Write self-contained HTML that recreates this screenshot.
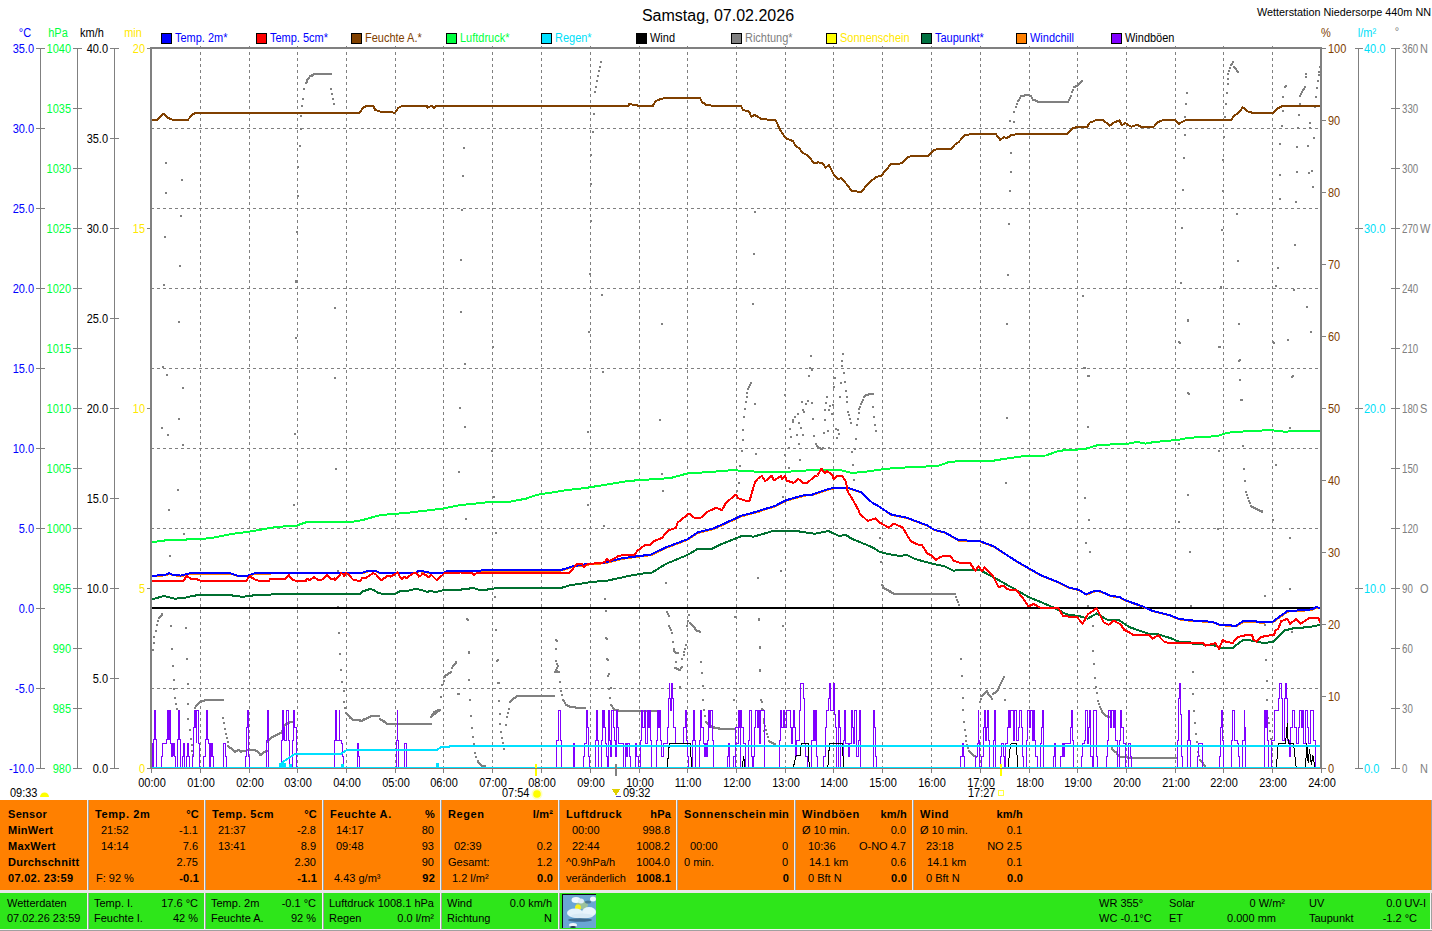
<!DOCTYPE html>
<html><head><meta charset="utf-8"><style>
html,body{margin:0;padding:0;background:#fff;width:1432px;height:931px;overflow:hidden;position:relative}
svg text{font-family:"Liberation Sans",sans-serif}
.b{position:absolute;font-family:"Liberation Sans",sans-serif;font-size:11px;white-space:pre;color:#000;line-height:16px}
</style></head><body>
<svg width="1432" height="931" viewBox="0 0 1432 931" style="position:absolute;left:0;top:0" shape-rendering="crispEdges">
<text x="718" y="21" fill="#000" text-anchor="middle" font-size="16" font-weight="normal" >Samstag, 07.02.2026</text>
<text x="1431" y="16" fill="#000" text-anchor="end" font-size="11" font-weight="normal" textLength="174" lengthAdjust="spacingAndGlyphs">Wetterstation Niedersorpe 440m NN</text>
<text transform="matrix(1 0 0 1.12 25 37)" fill="#0000ff" text-anchor="middle" font-size="11" font-weight="normal" >°C</text>
<text transform="matrix(1 0 0 1.12 58 37)" fill="#00ff40" text-anchor="middle" font-size="11" font-weight="normal" >hPa</text>
<text transform="matrix(1 0 0 1.12 92 37)" fill="#000" text-anchor="middle" font-size="11" font-weight="normal" >km/h</text>
<text transform="matrix(1 0 0 1.12 133 37)" fill="#ffe800" text-anchor="middle" font-size="11" font-weight="normal" >min</text>
<text transform="matrix(1 0 0 1.12 1326 37)" fill="#804000" text-anchor="middle" font-size="11" font-weight="normal" >%</text>
<text transform="matrix(1 0 0 1.12 1367 37)" fill="#00e0f8" text-anchor="middle" font-size="11" font-weight="normal" >l/m²</text>
<text x="1397" y="35" fill="#808080" text-anchor="middle" font-size="11" font-weight="normal" >°</text>
<rect x="161.5" y="33.5" width="10" height="10" fill="#0000ff" stroke="#000" stroke-width="1"/>
<text transform="matrix(1 0 0 1.12 175 42)" fill="#0000ff" text-anchor="start" font-size="11" font-weight="normal" >Temp. 2m*</text>
<rect x="256.5" y="33.5" width="10" height="10" fill="#ff0000" stroke="#000" stroke-width="1"/>
<text transform="matrix(1 0 0 1.12 270 42)" fill="#0000ff" text-anchor="start" font-size="11" font-weight="normal" >Temp. 5cm*</text>
<rect x="351.5" y="33.5" width="10" height="10" fill="#804000" stroke="#000" stroke-width="1"/>
<text transform="matrix(1 0 0 1.12 365 42)" fill="#804000" text-anchor="start" font-size="11" font-weight="normal" >Feuchte A.*</text>
<rect x="446.5" y="33.5" width="10" height="10" fill="#00ff40" stroke="#000" stroke-width="1"/>
<text transform="matrix(1 0 0 1.12 460 42)" fill="#00ff40" text-anchor="start" font-size="11" font-weight="normal" >Luftdruck*</text>
<rect x="541.5" y="33.5" width="10" height="10" fill="#00e0ff" stroke="#000" stroke-width="1"/>
<text transform="matrix(1 0 0 1.12 555 42)" fill="#00e0f8" text-anchor="start" font-size="11" font-weight="normal" >Regen*</text>
<rect x="636.5" y="33.5" width="10" height="10" fill="#000000" stroke="#000" stroke-width="1"/>
<text transform="matrix(1 0 0 1.12 650 42)" fill="#000" text-anchor="start" font-size="11" font-weight="normal" >Wind</text>
<rect x="731.5" y="33.5" width="10" height="10" fill="#808080" stroke="#000" stroke-width="1"/>
<text transform="matrix(1 0 0 1.12 745 42)" fill="#808080" text-anchor="start" font-size="11" font-weight="normal" >Richtung*</text>
<rect x="826.5" y="33.5" width="10" height="10" fill="#ffff00" stroke="#000" stroke-width="1"/>
<text transform="matrix(1 0 0 1.12 840 42)" fill="#ffe800" text-anchor="start" font-size="11" font-weight="normal" >Sonnenschein</text>
<rect x="921.5" y="33.5" width="10" height="10" fill="#007040" stroke="#000" stroke-width="1"/>
<text transform="matrix(1 0 0 1.12 935 42)" fill="#0000ff" text-anchor="start" font-size="11" font-weight="normal" >Taupunkt*</text>
<rect x="1016.5" y="33.5" width="10" height="10" fill="#ff8000" stroke="#000" stroke-width="1"/>
<text transform="matrix(1 0 0 1.12 1030 42)" fill="#0000ff" text-anchor="start" font-size="11" font-weight="normal" >Windchill</text>
<rect x="1111.5" y="33.5" width="10" height="10" fill="#8000ff" stroke="#000" stroke-width="1"/>
<text transform="matrix(1 0 0 1.12 1125 42)" fill="#000" text-anchor="start" font-size="11" font-weight="normal" >Windböen</text>
<line x1="40.5" y1="48" x2="40.5" y2="769" stroke="#808080" stroke-width="1" />
<line x1="36" y1="48.5" x2="45" y2="48.5" stroke="#808080" stroke-width="1" />
<text transform="matrix(1 0 0 1.12 34 53)" fill="#0000ff" text-anchor="end" font-size="11" font-weight="normal" >35.0</text>
<line x1="36" y1="128.5" x2="45" y2="128.5" stroke="#808080" stroke-width="1" />
<text transform="matrix(1 0 0 1.12 34 133)" fill="#0000ff" text-anchor="end" font-size="11" font-weight="normal" >30.0</text>
<line x1="36" y1="208.5" x2="45" y2="208.5" stroke="#808080" stroke-width="1" />
<text transform="matrix(1 0 0 1.12 34 213)" fill="#0000ff" text-anchor="end" font-size="11" font-weight="normal" >25.0</text>
<line x1="36" y1="288.5" x2="45" y2="288.5" stroke="#808080" stroke-width="1" />
<text transform="matrix(1 0 0 1.12 34 293)" fill="#0000ff" text-anchor="end" font-size="11" font-weight="normal" >20.0</text>
<line x1="36" y1="368.5" x2="45" y2="368.5" stroke="#808080" stroke-width="1" />
<text transform="matrix(1 0 0 1.12 34 373)" fill="#0000ff" text-anchor="end" font-size="11" font-weight="normal" >15.0</text>
<line x1="36" y1="448.5" x2="45" y2="448.5" stroke="#808080" stroke-width="1" />
<text transform="matrix(1 0 0 1.12 34 453)" fill="#0000ff" text-anchor="end" font-size="11" font-weight="normal" >10.0</text>
<line x1="36" y1="528.5" x2="45" y2="528.5" stroke="#808080" stroke-width="1" />
<text transform="matrix(1 0 0 1.12 34 533)" fill="#0000ff" text-anchor="end" font-size="11" font-weight="normal" >5.0</text>
<line x1="36" y1="608.5" x2="45" y2="608.5" stroke="#808080" stroke-width="1" />
<text transform="matrix(1 0 0 1.12 34 613)" fill="#0000ff" text-anchor="end" font-size="11" font-weight="normal" >0.0</text>
<line x1="36" y1="688.5" x2="45" y2="688.5" stroke="#808080" stroke-width="1" />
<text transform="matrix(1 0 0 1.12 34 693)" fill="#0000ff" text-anchor="end" font-size="11" font-weight="normal" >-5.0</text>
<line x1="36" y1="768.5" x2="45" y2="768.5" stroke="#808080" stroke-width="1" />
<text transform="matrix(1 0 0 1.12 34 773)" fill="#0000ff" text-anchor="end" font-size="11" font-weight="normal" >-10.0</text>
<line x1="77.5" y1="48" x2="77.5" y2="769" stroke="#808080" stroke-width="1" />
<line x1="73" y1="48.5" x2="82" y2="48.5" stroke="#808080" stroke-width="1" />
<text transform="matrix(1 0 0 1.12 71 53)" fill="#00ff40" text-anchor="end" font-size="11" font-weight="normal" >1040</text>
<line x1="73" y1="108.5" x2="82" y2="108.5" stroke="#808080" stroke-width="1" />
<text transform="matrix(1 0 0 1.12 71 113)" fill="#00ff40" text-anchor="end" font-size="11" font-weight="normal" >1035</text>
<line x1="73" y1="168.5" x2="82" y2="168.5" stroke="#808080" stroke-width="1" />
<text transform="matrix(1 0 0 1.12 71 173)" fill="#00ff40" text-anchor="end" font-size="11" font-weight="normal" >1030</text>
<line x1="73" y1="228.5" x2="82" y2="228.5" stroke="#808080" stroke-width="1" />
<text transform="matrix(1 0 0 1.12 71 233)" fill="#00ff40" text-anchor="end" font-size="11" font-weight="normal" >1025</text>
<line x1="73" y1="288.5" x2="82" y2="288.5" stroke="#808080" stroke-width="1" />
<text transform="matrix(1 0 0 1.12 71 293)" fill="#00ff40" text-anchor="end" font-size="11" font-weight="normal" >1020</text>
<line x1="73" y1="348.5" x2="82" y2="348.5" stroke="#808080" stroke-width="1" />
<text transform="matrix(1 0 0 1.12 71 353)" fill="#00ff40" text-anchor="end" font-size="11" font-weight="normal" >1015</text>
<line x1="73" y1="408.5" x2="82" y2="408.5" stroke="#808080" stroke-width="1" />
<text transform="matrix(1 0 0 1.12 71 413)" fill="#00ff40" text-anchor="end" font-size="11" font-weight="normal" >1010</text>
<line x1="73" y1="468.5" x2="82" y2="468.5" stroke="#808080" stroke-width="1" />
<text transform="matrix(1 0 0 1.12 71 473)" fill="#00ff40" text-anchor="end" font-size="11" font-weight="normal" >1005</text>
<line x1="73" y1="528.5" x2="82" y2="528.5" stroke="#808080" stroke-width="1" />
<text transform="matrix(1 0 0 1.12 71 533)" fill="#00ff40" text-anchor="end" font-size="11" font-weight="normal" >1000</text>
<line x1="73" y1="588.5" x2="82" y2="588.5" stroke="#808080" stroke-width="1" />
<text transform="matrix(1 0 0 1.12 71 593)" fill="#00ff40" text-anchor="end" font-size="11" font-weight="normal" >995</text>
<line x1="73" y1="648.5" x2="82" y2="648.5" stroke="#808080" stroke-width="1" />
<text transform="matrix(1 0 0 1.12 71 653)" fill="#00ff40" text-anchor="end" font-size="11" font-weight="normal" >990</text>
<line x1="73" y1="708.5" x2="82" y2="708.5" stroke="#808080" stroke-width="1" />
<text transform="matrix(1 0 0 1.12 71 713)" fill="#00ff40" text-anchor="end" font-size="11" font-weight="normal" >985</text>
<line x1="73" y1="768.5" x2="82" y2="768.5" stroke="#808080" stroke-width="1" />
<text transform="matrix(1 0 0 1.12 71 773)" fill="#00ff40" text-anchor="end" font-size="11" font-weight="normal" >980</text>
<line x1="114.5" y1="48" x2="114.5" y2="769" stroke="#808080" stroke-width="1" />
<line x1="110" y1="48.5" x2="119" y2="48.5" stroke="#808080" stroke-width="1" />
<text transform="matrix(1 0 0 1.12 108 53)" fill="#000" text-anchor="end" font-size="11" font-weight="normal" >40.0</text>
<line x1="110" y1="138.5" x2="119" y2="138.5" stroke="#808080" stroke-width="1" />
<text transform="matrix(1 0 0 1.12 108 143)" fill="#000" text-anchor="end" font-size="11" font-weight="normal" >35.0</text>
<line x1="110" y1="228.5" x2="119" y2="228.5" stroke="#808080" stroke-width="1" />
<text transform="matrix(1 0 0 1.12 108 233)" fill="#000" text-anchor="end" font-size="11" font-weight="normal" >30.0</text>
<line x1="110" y1="318.5" x2="119" y2="318.5" stroke="#808080" stroke-width="1" />
<text transform="matrix(1 0 0 1.12 108 323)" fill="#000" text-anchor="end" font-size="11" font-weight="normal" >25.0</text>
<line x1="110" y1="408.5" x2="119" y2="408.5" stroke="#808080" stroke-width="1" />
<text transform="matrix(1 0 0 1.12 108 413)" fill="#000" text-anchor="end" font-size="11" font-weight="normal" >20.0</text>
<line x1="110" y1="498.5" x2="119" y2="498.5" stroke="#808080" stroke-width="1" />
<text transform="matrix(1 0 0 1.12 108 503)" fill="#000" text-anchor="end" font-size="11" font-weight="normal" >15.0</text>
<line x1="110" y1="588.5" x2="119" y2="588.5" stroke="#808080" stroke-width="1" />
<text transform="matrix(1 0 0 1.12 108 593)" fill="#000" text-anchor="end" font-size="11" font-weight="normal" >10.0</text>
<line x1="110" y1="678.5" x2="119" y2="678.5" stroke="#808080" stroke-width="1" />
<text transform="matrix(1 0 0 1.12 108 683)" fill="#000" text-anchor="end" font-size="11" font-weight="normal" >5.0</text>
<line x1="110" y1="768.5" x2="119" y2="768.5" stroke="#808080" stroke-width="1" />
<text transform="matrix(1 0 0 1.12 108 773)" fill="#000" text-anchor="end" font-size="11" font-weight="normal" >0.0</text>
<line x1="147" y1="48.5" x2="151" y2="48.5" stroke="#808080" stroke-width="1" />
<text transform="matrix(1 0 0 1.12 145 53)" fill="#ffe800" text-anchor="end" font-size="11" font-weight="normal" >20</text>
<line x1="147" y1="228.5" x2="151" y2="228.5" stroke="#808080" stroke-width="1" />
<text transform="matrix(1 0 0 1.12 145 233)" fill="#ffe800" text-anchor="end" font-size="11" font-weight="normal" >15</text>
<line x1="147" y1="408.5" x2="151" y2="408.5" stroke="#808080" stroke-width="1" />
<text transform="matrix(1 0 0 1.12 145 413)" fill="#ffe800" text-anchor="end" font-size="11" font-weight="normal" >10</text>
<line x1="147" y1="588.5" x2="151" y2="588.5" stroke="#808080" stroke-width="1" />
<text transform="matrix(1 0 0 1.12 145 593)" fill="#ffe800" text-anchor="end" font-size="11" font-weight="normal" >5</text>
<line x1="147" y1="768.5" x2="151" y2="768.5" stroke="#808080" stroke-width="1" />
<text transform="matrix(1 0 0 1.12 145 773)" fill="#ffe800" text-anchor="end" font-size="11" font-weight="normal" >0</text>
<line x1="1321" y1="48.5" x2="1326" y2="48.5" stroke="#808080" stroke-width="1" />
<text transform="matrix(1 0 0 1.12 1328 53)" fill="#804000" text-anchor="start" font-size="11" font-weight="normal" >100</text>
<line x1="1321" y1="120.5" x2="1326" y2="120.5" stroke="#808080" stroke-width="1" />
<text transform="matrix(1 0 0 1.12 1328 125)" fill="#804000" text-anchor="start" font-size="11" font-weight="normal" >90</text>
<line x1="1321" y1="192.5" x2="1326" y2="192.5" stroke="#808080" stroke-width="1" />
<text transform="matrix(1 0 0 1.12 1328 197)" fill="#804000" text-anchor="start" font-size="11" font-weight="normal" >80</text>
<line x1="1321" y1="264.5" x2="1326" y2="264.5" stroke="#808080" stroke-width="1" />
<text transform="matrix(1 0 0 1.12 1328 269)" fill="#804000" text-anchor="start" font-size="11" font-weight="normal" >70</text>
<line x1="1321" y1="336.5" x2="1326" y2="336.5" stroke="#808080" stroke-width="1" />
<text transform="matrix(1 0 0 1.12 1328 341)" fill="#804000" text-anchor="start" font-size="11" font-weight="normal" >60</text>
<line x1="1321" y1="408.5" x2="1326" y2="408.5" stroke="#808080" stroke-width="1" />
<text transform="matrix(1 0 0 1.12 1328 413)" fill="#804000" text-anchor="start" font-size="11" font-weight="normal" >50</text>
<line x1="1321" y1="480.5" x2="1326" y2="480.5" stroke="#808080" stroke-width="1" />
<text transform="matrix(1 0 0 1.12 1328 485)" fill="#804000" text-anchor="start" font-size="11" font-weight="normal" >40</text>
<line x1="1321" y1="552.5" x2="1326" y2="552.5" stroke="#808080" stroke-width="1" />
<text transform="matrix(1 0 0 1.12 1328 557)" fill="#804000" text-anchor="start" font-size="11" font-weight="normal" >30</text>
<line x1="1321" y1="624.5" x2="1326" y2="624.5" stroke="#808080" stroke-width="1" />
<text transform="matrix(1 0 0 1.12 1328 629)" fill="#804000" text-anchor="start" font-size="11" font-weight="normal" >20</text>
<line x1="1321" y1="696.5" x2="1326" y2="696.5" stroke="#808080" stroke-width="1" />
<text transform="matrix(1 0 0 1.12 1328 701)" fill="#804000" text-anchor="start" font-size="11" font-weight="normal" >10</text>
<line x1="1321" y1="768.5" x2="1326" y2="768.5" stroke="#808080" stroke-width="1" />
<text transform="matrix(1 0 0 1.12 1328 773)" fill="#804000" text-anchor="start" font-size="11" font-weight="normal" >0</text>
<line x1="1358.5" y1="48" x2="1358.5" y2="769" stroke="#808080" stroke-width="1" />
<line x1="1355" y1="48.5" x2="1363" y2="48.5" stroke="#808080" stroke-width="1" />
<text transform="matrix(1 0 0 1.12 1364 53)" fill="#00e0f8" text-anchor="start" font-size="11" font-weight="normal" >40.0</text>
<line x1="1355" y1="228.5" x2="1363" y2="228.5" stroke="#808080" stroke-width="1" />
<text transform="matrix(1 0 0 1.12 1364 233)" fill="#00e0f8" text-anchor="start" font-size="11" font-weight="normal" >30.0</text>
<line x1="1355" y1="408.5" x2="1363" y2="408.5" stroke="#808080" stroke-width="1" />
<text transform="matrix(1 0 0 1.12 1364 413)" fill="#00e0f8" text-anchor="start" font-size="11" font-weight="normal" >20.0</text>
<line x1="1355" y1="588.5" x2="1363" y2="588.5" stroke="#808080" stroke-width="1" />
<text transform="matrix(1 0 0 1.12 1364 593)" fill="#00e0f8" text-anchor="start" font-size="11" font-weight="normal" >10.0</text>
<line x1="1355" y1="768.5" x2="1363" y2="768.5" stroke="#808080" stroke-width="1" />
<text transform="matrix(1 0 0 1.12 1364 773)" fill="#00e0f8" text-anchor="start" font-size="11" font-weight="normal" >0.0</text>
<line x1="1395.5" y1="48" x2="1395.5" y2="769" stroke="#808080" stroke-width="1" />
<line x1="1391" y1="48.5" x2="1400" y2="48.5" stroke="#808080" stroke-width="1" />
<text transform="matrix(1 0 0 1.12 1402 53)" fill="#808080" text-anchor="start" font-size="11" font-weight="normal" textLength="16.2" lengthAdjust="spacingAndGlyphs">360</text>
<text transform="matrix(1 0 0 1.12 1420 53)" fill="#808080" text-anchor="start" font-size="11" font-weight="normal" >N</text>
<line x1="1391" y1="108.5" x2="1400" y2="108.5" stroke="#808080" stroke-width="1" />
<text transform="matrix(1 0 0 1.12 1402 113)" fill="#808080" text-anchor="start" font-size="11" font-weight="normal" textLength="16.2" lengthAdjust="spacingAndGlyphs">330</text>
<line x1="1391" y1="168.5" x2="1400" y2="168.5" stroke="#808080" stroke-width="1" />
<text transform="matrix(1 0 0 1.12 1402 173)" fill="#808080" text-anchor="start" font-size="11" font-weight="normal" textLength="16.2" lengthAdjust="spacingAndGlyphs">300</text>
<line x1="1391" y1="228.5" x2="1400" y2="228.5" stroke="#808080" stroke-width="1" />
<text transform="matrix(1 0 0 1.12 1402 233)" fill="#808080" text-anchor="start" font-size="11" font-weight="normal" textLength="16.2" lengthAdjust="spacingAndGlyphs">270</text>
<text transform="matrix(1 0 0 1.12 1420 233)" fill="#808080" text-anchor="start" font-size="11" font-weight="normal" >W</text>
<line x1="1391" y1="288.5" x2="1400" y2="288.5" stroke="#808080" stroke-width="1" />
<text transform="matrix(1 0 0 1.12 1402 293)" fill="#808080" text-anchor="start" font-size="11" font-weight="normal" textLength="16.2" lengthAdjust="spacingAndGlyphs">240</text>
<line x1="1391" y1="348.5" x2="1400" y2="348.5" stroke="#808080" stroke-width="1" />
<text transform="matrix(1 0 0 1.12 1402 353)" fill="#808080" text-anchor="start" font-size="11" font-weight="normal" textLength="16.2" lengthAdjust="spacingAndGlyphs">210</text>
<line x1="1391" y1="408.5" x2="1400" y2="408.5" stroke="#808080" stroke-width="1" />
<text transform="matrix(1 0 0 1.12 1402 413)" fill="#808080" text-anchor="start" font-size="11" font-weight="normal" textLength="16.2" lengthAdjust="spacingAndGlyphs">180</text>
<text transform="matrix(1 0 0 1.12 1420 413)" fill="#808080" text-anchor="start" font-size="11" font-weight="normal" >S</text>
<line x1="1391" y1="468.5" x2="1400" y2="468.5" stroke="#808080" stroke-width="1" />
<text transform="matrix(1 0 0 1.12 1402 473)" fill="#808080" text-anchor="start" font-size="11" font-weight="normal" textLength="16.2" lengthAdjust="spacingAndGlyphs">150</text>
<line x1="1391" y1="528.5" x2="1400" y2="528.5" stroke="#808080" stroke-width="1" />
<text transform="matrix(1 0 0 1.12 1402 533)" fill="#808080" text-anchor="start" font-size="11" font-weight="normal" textLength="16.2" lengthAdjust="spacingAndGlyphs">120</text>
<line x1="1391" y1="588.5" x2="1400" y2="588.5" stroke="#808080" stroke-width="1" />
<text transform="matrix(1 0 0 1.12 1402 593)" fill="#808080" text-anchor="start" font-size="11" font-weight="normal" textLength="10.8" lengthAdjust="spacingAndGlyphs">90</text>
<text transform="matrix(1 0 0 1.12 1420 593)" fill="#808080" text-anchor="start" font-size="11" font-weight="normal" >O</text>
<line x1="1391" y1="648.5" x2="1400" y2="648.5" stroke="#808080" stroke-width="1" />
<text transform="matrix(1 0 0 1.12 1402 653)" fill="#808080" text-anchor="start" font-size="11" font-weight="normal" textLength="10.8" lengthAdjust="spacingAndGlyphs">60</text>
<line x1="1391" y1="708.5" x2="1400" y2="708.5" stroke="#808080" stroke-width="1" />
<text transform="matrix(1 0 0 1.12 1402 713)" fill="#808080" text-anchor="start" font-size="11" font-weight="normal" textLength="10.8" lengthAdjust="spacingAndGlyphs">30</text>
<line x1="1391" y1="768.5" x2="1400" y2="768.5" stroke="#808080" stroke-width="1" />
<text transform="matrix(1 0 0 1.12 1402 773)" fill="#808080" text-anchor="start" font-size="11" font-weight="normal" textLength="5.4" lengthAdjust="spacingAndGlyphs">0</text>
<text transform="matrix(1 0 0 1.12 1420 773)" fill="#808080" text-anchor="start" font-size="11" font-weight="normal" >N</text>
<line x1="200.5" y1="46" x2="200.5" y2="768" stroke="#808080" stroke-width="1" stroke-dasharray="3,3"/>
<line x1="249.5" y1="46" x2="249.5" y2="768" stroke="#808080" stroke-width="1" stroke-dasharray="3,3"/>
<line x1="297.5" y1="46" x2="297.5" y2="768" stroke="#808080" stroke-width="1" stroke-dasharray="3,3"/>
<line x1="346.5" y1="46" x2="346.5" y2="768" stroke="#808080" stroke-width="1" stroke-dasharray="3,3"/>
<line x1="395.5" y1="46" x2="395.5" y2="768" stroke="#808080" stroke-width="1" stroke-dasharray="3,3"/>
<line x1="443.5" y1="46" x2="443.5" y2="768" stroke="#808080" stroke-width="1" stroke-dasharray="3,3"/>
<line x1="492.5" y1="46" x2="492.5" y2="768" stroke="#808080" stroke-width="1" stroke-dasharray="3,3"/>
<line x1="541.5" y1="46" x2="541.5" y2="768" stroke="#808080" stroke-width="1" stroke-dasharray="3,3"/>
<line x1="590.5" y1="46" x2="590.5" y2="768" stroke="#808080" stroke-width="1" stroke-dasharray="3,3"/>
<line x1="639.5" y1="46" x2="639.5" y2="768" stroke="#808080" stroke-width="1" stroke-dasharray="3,3"/>
<line x1="687.5" y1="46" x2="687.5" y2="768" stroke="#808080" stroke-width="1" stroke-dasharray="3,3"/>
<line x1="736.5" y1="46" x2="736.5" y2="768" stroke="#808080" stroke-width="1" stroke-dasharray="3,3"/>
<line x1="785.5" y1="46" x2="785.5" y2="768" stroke="#808080" stroke-width="1" stroke-dasharray="3,3"/>
<line x1="833.5" y1="46" x2="833.5" y2="768" stroke="#808080" stroke-width="1" stroke-dasharray="3,3"/>
<line x1="882.5" y1="46" x2="882.5" y2="768" stroke="#808080" stroke-width="1" stroke-dasharray="3,3"/>
<line x1="931.5" y1="46" x2="931.5" y2="768" stroke="#808080" stroke-width="1" stroke-dasharray="3,3"/>
<line x1="980.5" y1="46" x2="980.5" y2="768" stroke="#808080" stroke-width="1" stroke-dasharray="3,3"/>
<line x1="1029.5" y1="46" x2="1029.5" y2="768" stroke="#808080" stroke-width="1" stroke-dasharray="3,3"/>
<line x1="1077.5" y1="46" x2="1077.5" y2="768" stroke="#808080" stroke-width="1" stroke-dasharray="3,3"/>
<line x1="1126.5" y1="46" x2="1126.5" y2="768" stroke="#808080" stroke-width="1" stroke-dasharray="3,3"/>
<line x1="1175.5" y1="46" x2="1175.5" y2="768" stroke="#808080" stroke-width="1" stroke-dasharray="3,3"/>
<line x1="1223.5" y1="46" x2="1223.5" y2="768" stroke="#808080" stroke-width="1" stroke-dasharray="3,3"/>
<line x1="1272.5" y1="46" x2="1272.5" y2="768" stroke="#808080" stroke-width="1" stroke-dasharray="3,3"/>
<line x1="151" y1="128.5" x2="1320" y2="128.5" stroke="#808080" stroke-width="1" stroke-dasharray="3,3"/>
<line x1="151" y1="208.5" x2="1320" y2="208.5" stroke="#808080" stroke-width="1" stroke-dasharray="3,3"/>
<line x1="151" y1="288.5" x2="1320" y2="288.5" stroke="#808080" stroke-width="1" stroke-dasharray="3,3"/>
<line x1="151" y1="368.5" x2="1320" y2="368.5" stroke="#808080" stroke-width="1" stroke-dasharray="3,3"/>
<line x1="151" y1="448.5" x2="1320" y2="448.5" stroke="#808080" stroke-width="1" stroke-dasharray="3,3"/>
<line x1="151" y1="528.5" x2="1320" y2="528.5" stroke="#808080" stroke-width="1" stroke-dasharray="3,3"/>
<line x1="151" y1="608.5" x2="1320" y2="608.5" stroke="#808080" stroke-width="1" stroke-dasharray="3,3"/>
<line x1="151" y1="688.5" x2="1320" y2="688.5" stroke="#808080" stroke-width="1" stroke-dasharray="3,3"/>
<line x1="151.5" y1="769" x2="151.5" y2="773" stroke="#808080" stroke-width="1" />
<text transform="matrix(1 0 0 1.12 152 787)" fill="#000" text-anchor="middle" font-size="11" font-weight="normal" >00:00</text>
<line x1="200.5" y1="769" x2="200.5" y2="773" stroke="#808080" stroke-width="1" />
<text transform="matrix(1 0 0 1.12 201 787)" fill="#000" text-anchor="middle" font-size="11" font-weight="normal" >01:00</text>
<line x1="249.5" y1="769" x2="249.5" y2="773" stroke="#808080" stroke-width="1" />
<text transform="matrix(1 0 0 1.12 250 787)" fill="#000" text-anchor="middle" font-size="11" font-weight="normal" >02:00</text>
<line x1="297.5" y1="769" x2="297.5" y2="773" stroke="#808080" stroke-width="1" />
<text transform="matrix(1 0 0 1.12 298 787)" fill="#000" text-anchor="middle" font-size="11" font-weight="normal" >03:00</text>
<line x1="346.5" y1="769" x2="346.5" y2="773" stroke="#808080" stroke-width="1" />
<text transform="matrix(1 0 0 1.12 347 787)" fill="#000" text-anchor="middle" font-size="11" font-weight="normal" >04:00</text>
<line x1="395.5" y1="769" x2="395.5" y2="773" stroke="#808080" stroke-width="1" />
<text transform="matrix(1 0 0 1.12 396 787)" fill="#000" text-anchor="middle" font-size="11" font-weight="normal" >05:00</text>
<line x1="443.5" y1="769" x2="443.5" y2="773" stroke="#808080" stroke-width="1" />
<text transform="matrix(1 0 0 1.12 444 787)" fill="#000" text-anchor="middle" font-size="11" font-weight="normal" >06:00</text>
<line x1="492.5" y1="769" x2="492.5" y2="773" stroke="#808080" stroke-width="1" />
<text transform="matrix(1 0 0 1.12 493 787)" fill="#000" text-anchor="middle" font-size="11" font-weight="normal" >07:00</text>
<line x1="541.5" y1="769" x2="541.5" y2="773" stroke="#808080" stroke-width="1" />
<text transform="matrix(1 0 0 1.12 542 787)" fill="#000" text-anchor="middle" font-size="11" font-weight="normal" >08:00</text>
<line x1="590.5" y1="769" x2="590.5" y2="773" stroke="#808080" stroke-width="1" />
<text transform="matrix(1 0 0 1.12 591 787)" fill="#000" text-anchor="middle" font-size="11" font-weight="normal" >09:00</text>
<line x1="639.5" y1="769" x2="639.5" y2="773" stroke="#808080" stroke-width="1" />
<text transform="matrix(1 0 0 1.12 640 787)" fill="#000" text-anchor="middle" font-size="11" font-weight="normal" >10:00</text>
<line x1="687.5" y1="769" x2="687.5" y2="773" stroke="#808080" stroke-width="1" />
<text transform="matrix(1 0 0 1.12 688 787)" fill="#000" text-anchor="middle" font-size="11" font-weight="normal" >11:00</text>
<line x1="736.5" y1="769" x2="736.5" y2="773" stroke="#808080" stroke-width="1" />
<text transform="matrix(1 0 0 1.12 737 787)" fill="#000" text-anchor="middle" font-size="11" font-weight="normal" >12:00</text>
<line x1="785.5" y1="769" x2="785.5" y2="773" stroke="#808080" stroke-width="1" />
<text transform="matrix(1 0 0 1.12 786 787)" fill="#000" text-anchor="middle" font-size="11" font-weight="normal" >13:00</text>
<line x1="833.5" y1="769" x2="833.5" y2="773" stroke="#808080" stroke-width="1" />
<text transform="matrix(1 0 0 1.12 834 787)" fill="#000" text-anchor="middle" font-size="11" font-weight="normal" >14:00</text>
<line x1="882.5" y1="769" x2="882.5" y2="773" stroke="#808080" stroke-width="1" />
<text transform="matrix(1 0 0 1.12 883 787)" fill="#000" text-anchor="middle" font-size="11" font-weight="normal" >15:00</text>
<line x1="931.5" y1="769" x2="931.5" y2="773" stroke="#808080" stroke-width="1" />
<text transform="matrix(1 0 0 1.12 932 787)" fill="#000" text-anchor="middle" font-size="11" font-weight="normal" >16:00</text>
<line x1="980.5" y1="769" x2="980.5" y2="773" stroke="#808080" stroke-width="1" />
<text transform="matrix(1 0 0 1.12 981 787)" fill="#000" text-anchor="middle" font-size="11" font-weight="normal" >17:00</text>
<line x1="1029.5" y1="769" x2="1029.5" y2="773" stroke="#808080" stroke-width="1" />
<text transform="matrix(1 0 0 1.12 1030 787)" fill="#000" text-anchor="middle" font-size="11" font-weight="normal" >18:00</text>
<line x1="1077.5" y1="769" x2="1077.5" y2="773" stroke="#808080" stroke-width="1" />
<text transform="matrix(1 0 0 1.12 1078 787)" fill="#000" text-anchor="middle" font-size="11" font-weight="normal" >19:00</text>
<line x1="1126.5" y1="769" x2="1126.5" y2="773" stroke="#808080" stroke-width="1" />
<text transform="matrix(1 0 0 1.12 1127 787)" fill="#000" text-anchor="middle" font-size="11" font-weight="normal" >20:00</text>
<line x1="1175.5" y1="769" x2="1175.5" y2="773" stroke="#808080" stroke-width="1" />
<text transform="matrix(1 0 0 1.12 1176 787)" fill="#000" text-anchor="middle" font-size="11" font-weight="normal" >21:00</text>
<line x1="1223.5" y1="769" x2="1223.5" y2="773" stroke="#808080" stroke-width="1" />
<text transform="matrix(1 0 0 1.12 1224 787)" fill="#000" text-anchor="middle" font-size="11" font-weight="normal" >22:00</text>
<line x1="1272.5" y1="769" x2="1272.5" y2="773" stroke="#808080" stroke-width="1" />
<text transform="matrix(1 0 0 1.12 1273 787)" fill="#000" text-anchor="middle" font-size="11" font-weight="normal" >23:00</text>
<line x1="1321.5" y1="769" x2="1321.5" y2="773" stroke="#808080" stroke-width="1" />
<text transform="matrix(1 0 0 1.12 1322 787)" fill="#000" text-anchor="middle" font-size="11" font-weight="normal" >24:00</text>
<path d="M152 649h2v2h-2zM153 642h2v2h-2zM153 636h2v2h-2zM155 630h2v2h-2zM156 624h2v2h-2zM157 620h2v2h-2zM158 617h2v2h-2zM159 616h2v2h-2zM160 615h2v2h-2zM161 614h2v2h-2zM161 613h2v2h-2zM194 713h2v2h-2zM194 707h2v2h-2zM195 705h2v2h-2zM196 704h2v2h-2zM197 703h2v2h-2zM198 702h2v2h-2zM199 701h2v2h-2zM200 701h2v2h-2zM201 700h2v2h-2zM202 700h2v2h-2zM203 700h2v2h-2zM204 699h2v2h-2zM205 699h2v2h-2zM206 699h2v2h-2zM207 699h2v2h-2zM208 699h2v2h-2zM209 699h2v2h-2zM210 699h2v2h-2zM211 699h2v2h-2zM212 699h2v2h-2zM213 699h2v2h-2zM214 699h2v2h-2zM215 699h2v2h-2zM216 699h2v2h-2zM217 699h2v2h-2zM218 699h2v2h-2zM219 699h2v2h-2zM220 699h2v2h-2zM221 699h2v2h-2zM222 699h2v2h-2zM222 717h2v2h-2zM223 722h2v2h-2zM224 728h2v2h-2zM225 733h2v2h-2zM226 737h2v2h-2zM227 741h2v2h-2zM227 745h2v2h-2zM228 746h2v2h-2zM229 747h2v2h-2zM230 747h2v2h-2zM231 748h2v2h-2zM232 749h2v2h-2zM233 750h2v2h-2zM234 751h2v2h-2zM235 750h2v2h-2zM236 750h2v2h-2zM237 749h2v2h-2zM238 749h2v2h-2zM239 750h2v2h-2zM240 751h2v2h-2zM241 750h2v2h-2zM242 750h2v2h-2zM243 750h2v2h-2zM244 750h2v2h-2zM245 750h2v2h-2zM246 749h2v2h-2zM247 749h2v2h-2zM248 749h2v2h-2zM249 749h2v2h-2zM250 749h2v2h-2zM251 749h2v2h-2zM252 749h2v2h-2zM253 749h2v2h-2zM254 749h2v2h-2zM255 750h2v2h-2zM256 750h2v2h-2zM257 751h2v2h-2zM258 752h2v2h-2zM259 753h2v2h-2zM259 754h2v2h-2zM260 754h2v2h-2zM261 753h2v2h-2zM262 752h2v2h-2zM263 751h2v2h-2zM264 751h2v2h-2zM265 750h2v2h-2zM266 750h2v2h-2zM267 741h2v2h-2zM268 739h2v2h-2zM269 738h2v2h-2zM270 737h2v2h-2zM271 736h2v2h-2zM272 736h2v2h-2zM273 735h2v2h-2zM274 735h2v2h-2zM275 734h2v2h-2zM276 734h2v2h-2zM277 733h2v2h-2zM278 733h2v2h-2zM279 732h2v2h-2zM280 732h2v2h-2zM281 731h2v2h-2zM281 730h2v2h-2zM282 728h2v2h-2zM283 726h2v2h-2zM284 724h2v2h-2zM285 723h2v2h-2zM286 723h2v2h-2zM287 722h2v2h-2zM288 722h2v2h-2zM289 721h2v2h-2zM290 721h2v2h-2zM291 721h2v2h-2zM295 280h2v2h-2zM296 231h2v2h-2zM297 195h2v2h-2zM297 166h2v2h-2zM299 145h2v2h-2zM300 128h2v2h-2zM300 115h2v2h-2zM301 105h2v2h-2zM302 98h2v2h-2zM303 88h2v2h-2zM305 82h2v2h-2zM306 81h2v2h-2zM306 79h2v2h-2zM307 78h2v2h-2zM308 77h2v2h-2zM309 75h2v2h-2zM310 75h2v2h-2zM311 75h2v2h-2zM311 74h2v2h-2zM312 74h2v2h-2zM313 73h2v2h-2zM314 73h2v2h-2zM315 73h2v2h-2zM316 73h2v2h-2zM317 73h2v2h-2zM318 73h2v2h-2zM319 73h2v2h-2zM320 73h2v2h-2zM321 73h2v2h-2zM322 73h2v2h-2zM323 73h2v2h-2zM324 73h2v2h-2zM325 73h2v2h-2zM326 73h2v2h-2zM327 73h2v2h-2zM328 73h2v2h-2zM329 73h2v2h-2zM330 73h2v2h-2zM330 88h2v2h-2zM331 93h2v2h-2zM332 98h2v2h-2zM333 103h2v2h-2zM338 632h2v2h-2zM339 653h2v2h-2zM340 669h2v2h-2zM341 681h2v2h-2zM343 690h2v2h-2zM343 701h2v2h-2zM344 707h2v2h-2zM345 712h2v2h-2zM346 713h2v2h-2zM347 714h2v2h-2zM348 715h2v2h-2zM349 716h2v2h-2zM349 717h2v2h-2zM350 717h2v2h-2zM351 718h2v2h-2zM352 719h2v2h-2zM353 719h2v2h-2zM354 719h2v2h-2zM355 719h2v2h-2zM356 719h2v2h-2zM357 719h2v2h-2zM358 719h2v2h-2zM359 719h2v2h-2zM359 720h2v2h-2zM360 720h2v2h-2zM361 720h2v2h-2zM362 719h2v2h-2zM363 719h2v2h-2zM363 718h2v2h-2zM364 718h2v2h-2zM365 718h2v2h-2zM366 717h2v2h-2zM367 717h2v2h-2zM368 716h2v2h-2zM369 716h2v2h-2zM370 715h2v2h-2zM371 715h2v2h-2zM372 715h2v2h-2zM373 715h2v2h-2zM374 715h2v2h-2zM375 715h2v2h-2zM376 715h2v2h-2zM377 715h2v2h-2zM378 715h2v2h-2zM379 718h2v2h-2zM380 719h2v2h-2zM381 719h2v2h-2zM382 720h2v2h-2zM383 720h2v2h-2zM383 721h2v2h-2zM384 721h2v2h-2zM385 722h2v2h-2zM386 723h2v2h-2zM387 723h2v2h-2zM388 723h2v2h-2zM389 723h2v2h-2zM390 723h2v2h-2zM391 723h2v2h-2zM392 723h2v2h-2zM393 723h2v2h-2zM394 723h2v2h-2zM395 723h2v2h-2zM396 723h2v2h-2zM397 723h2v2h-2zM398 723h2v2h-2zM399 723h2v2h-2zM400 723h2v2h-2zM401 723h2v2h-2zM402 723h2v2h-2zM403 723h2v2h-2zM404 723h2v2h-2zM405 723h2v2h-2zM406 723h2v2h-2zM407 723h2v2h-2zM408 723h2v2h-2zM409 723h2v2h-2zM410 723h2v2h-2zM411 723h2v2h-2zM412 723h2v2h-2zM413 723h2v2h-2zM414 723h2v2h-2zM415 723h2v2h-2zM416 723h2v2h-2zM417 723h2v2h-2zM418 723h2v2h-2zM419 723h2v2h-2zM420 723h2v2h-2zM421 723h2v2h-2zM422 723h2v2h-2zM423 723h2v2h-2zM424 723h2v2h-2zM425 723h2v2h-2zM426 723h2v2h-2zM427 723h2v2h-2zM428 723h2v2h-2zM429 723h2v2h-2zM430 723h2v2h-2zM431 715h2v2h-2zM432 714h2v2h-2zM433 713h2v2h-2zM434 713h2v2h-2zM435 712h2v2h-2zM436 711h2v2h-2zM437 710h2v2h-2zM438 710h2v2h-2zM439 709h2v2h-2zM441 684h2v2h-2zM443 680h2v2h-2zM444 676h2v2h-2zM444 675h2v2h-2zM445 674h2v2h-2zM446 674h2v2h-2zM447 673h2v2h-2zM448 672h2v2h-2zM449 672h2v2h-2zM450 671h2v2h-2zM451 667h2v2h-2zM452 665h2v2h-2zM453 664h2v2h-2zM454 663h2v2h-2zM455 662h2v2h-2zM455 661h2v2h-2zM430 716h2v2h-2zM431 714h2v2h-2zM432 713h2v2h-2zM433 711h2v2h-2zM434 711h2v2h-2zM435 711h2v2h-2zM435 710h2v2h-2zM436 710h2v2h-2zM437 709h2v2h-2zM438 709h2v2h-2zM439 709h2v2h-2zM469 699h2v2h-2zM470 715h2v2h-2zM471 727h2v2h-2zM472 736h2v2h-2zM473 743h2v2h-2zM474 752h2v2h-2zM475 756h2v2h-2zM477 760h2v2h-2zM477 761h2v2h-2zM478 762h2v2h-2zM479 763h2v2h-2zM480 764h2v2h-2zM481 765h2v2h-2zM482 765h2v2h-2zM483 765h2v2h-2zM484 765h2v2h-2zM498 700h2v2h-2zM499 713h2v2h-2zM499 723h2v2h-2zM500 731h2v2h-2zM501 737h2v2h-2zM502 742h2v2h-2zM503 748h2v2h-2zM505 724h2v2h-2zM506 716h2v2h-2zM507 712h2v2h-2zM508 708h2v2h-2zM509 701h2v2h-2zM510 700h2v2h-2zM511 699h2v2h-2zM512 698h2v2h-2zM513 697h2v2h-2zM514 697h2v2h-2zM515 696h2v2h-2zM516 695h2v2h-2zM517 695h2v2h-2zM518 695h2v2h-2zM519 695h2v2h-2zM520 695h2v2h-2zM521 695h2v2h-2zM522 695h2v2h-2zM523 695h2v2h-2zM524 695h2v2h-2zM525 695h2v2h-2zM526 695h2v2h-2zM527 695h2v2h-2zM528 695h2v2h-2zM529 695h2v2h-2zM530 695h2v2h-2zM531 695h2v2h-2zM532 695h2v2h-2zM533 695h2v2h-2zM534 695h2v2h-2zM535 695h2v2h-2zM536 695h2v2h-2zM537 695h2v2h-2zM538 695h2v2h-2zM539 695h2v2h-2zM540 695h2v2h-2zM541 695h2v2h-2zM542 695h2v2h-2zM543 695h2v2h-2zM544 695h2v2h-2zM545 695h2v2h-2zM546 695h2v2h-2zM547 695h2v2h-2zM548 695h2v2h-2zM549 695h2v2h-2zM550 695h2v2h-2zM551 695h2v2h-2zM552 695h2v2h-2zM553 695h2v2h-2zM556 640h2v2h-2zM555 648h2v2h-2zM555 660h2v2h-2zM556 663h2v2h-2zM557 665h2v2h-2zM556 667h2v2h-2zM555 669h2v2h-2zM554 671h2v2h-2zM555 671h2v2h-2zM556 671h2v2h-2zM557 671h2v2h-2zM558 671h2v2h-2zM559 681h2v2h-2zM560 690h2v2h-2zM561 694h2v2h-2zM562 699h2v2h-2zM563 700h2v2h-2zM564 702h2v2h-2zM565 704h2v2h-2zM566 704h2v2h-2zM567 705h2v2h-2zM568 705h2v2h-2zM569 706h2v2h-2zM570 706h2v2h-2zM571 706h2v2h-2zM572 706h2v2h-2zM573 706h2v2h-2zM574 706h2v2h-2zM575 707h2v2h-2zM576 707h2v2h-2zM577 707h2v2h-2zM578 707h2v2h-2zM579 707h2v2h-2zM580 707h2v2h-2zM581 707h2v2h-2zM582 707h2v2h-2zM583 707h2v2h-2zM584 707h2v2h-2zM588 331h2v2h-2zM589 273h2v2h-2zM590 220h2v2h-2zM590 183h2v2h-2zM590 154h2v2h-2zM592 131h2v2h-2zM593 113h2v2h-2zM594 91h2v2h-2zM595 86h2v2h-2zM596 80h2v2h-2zM597 75h2v2h-2zM598 70h2v2h-2zM599 66h2v2h-2zM600 61h2v2h-2zM608 688h2v2h-2zM609 697h2v2h-2zM610 704h2v2h-2zM611 705h2v2h-2zM612 707h2v2h-2zM613 708h2v2h-2zM614 709h2v2h-2zM615 709h2v2h-2zM616 709h2v2h-2zM617 709h2v2h-2zM618 710h2v2h-2zM619 710h2v2h-2zM620 710h2v2h-2zM621 710h2v2h-2zM622 710h2v2h-2zM623 710h2v2h-2zM624 710h2v2h-2zM625 710h2v2h-2zM626 710h2v2h-2zM627 710h2v2h-2zM628 710h2v2h-2zM629 710h2v2h-2zM630 710h2v2h-2zM631 710h2v2h-2zM632 710h2v2h-2zM633 710h2v2h-2zM634 710h2v2h-2zM635 710h2v2h-2zM636 710h2v2h-2zM637 710h2v2h-2zM638 710h2v2h-2zM639 710h2v2h-2zM640 710h2v2h-2zM641 710h2v2h-2zM642 710h2v2h-2zM643 710h2v2h-2zM644 710h2v2h-2zM645 710h2v2h-2zM646 710h2v2h-2zM647 710h2v2h-2zM648 710h2v2h-2zM649 710h2v2h-2zM650 710h2v2h-2zM651 710h2v2h-2zM652 710h2v2h-2zM653 710h2v2h-2zM654 710h2v2h-2zM655 710h2v2h-2zM656 710h2v2h-2zM657 710h2v2h-2zM658 710h2v2h-2zM659 710h2v2h-2zM666 611h2v2h-2zM667 613h2v2h-2zM668 615h2v2h-2zM668 625h2v2h-2zM669 627h2v2h-2zM670 629h2v2h-2zM671 632h2v2h-2zM672 641h2v2h-2zM673 648h2v2h-2zM673 650h2v2h-2zM674 651h2v2h-2zM675 652h2v2h-2zM676 652h2v2h-2zM677 652h2v2h-2zM675 661h2v2h-2zM674 667h2v2h-2zM675 667h2v2h-2zM676 668h2v2h-2zM677 668h2v2h-2zM678 669h2v2h-2zM679 669h2v2h-2zM680 667h2v2h-2zM681 666h2v2h-2zM681 658h2v2h-2zM683 654h2v2h-2zM683 651h2v2h-2zM684 648h2v2h-2zM685 644h2v2h-2zM688 614h2v2h-2zM687 620h2v2h-2zM686 625h2v2h-2zM689 622h2v2h-2zM690 623h2v2h-2zM691 624h2v2h-2zM692 625h2v2h-2zM693 626h2v2h-2zM694 627h2v2h-2zM694 628h2v2h-2zM695 629h2v2h-2zM696 630h2v2h-2zM697 630h2v2h-2zM698 630h2v2h-2zM699 631h2v2h-2zM700 661h2v2h-2zM701 672h2v2h-2zM702 685h2v2h-2zM702 699h2v2h-2zM703 709h2v2h-2zM704 715h2v2h-2zM705 721h2v2h-2zM706 722h2v2h-2zM707 723h2v2h-2zM708 723h2v2h-2zM708 724h2v2h-2zM709 725h2v2h-2zM710 725h2v2h-2zM711 726h2v2h-2zM712 726h2v2h-2zM713 726h2v2h-2zM713 727h2v2h-2zM714 727h2v2h-2zM715 727h2v2h-2zM716 727h2v2h-2zM717 727h2v2h-2zM718 727h2v2h-2zM718 728h2v2h-2zM719 728h2v2h-2zM720 728h2v2h-2zM721 728h2v2h-2zM722 728h2v2h-2zM723 728h2v2h-2zM724 728h2v2h-2zM725 728h2v2h-2zM726 728h2v2h-2zM727 728h2v2h-2zM728 728h2v2h-2zM729 728h2v2h-2zM730 728h2v2h-2zM731 728h2v2h-2zM732 728h2v2h-2zM733 728h2v2h-2zM739 465h2v2h-2zM741 450h2v2h-2zM742 439h2v2h-2zM742 429h2v2h-2zM743 416h2v2h-2zM744 408h2v2h-2zM745 401h2v2h-2zM746 396h2v2h-2zM746 392h2v2h-2zM747 388h2v2h-2zM748 386h2v2h-2zM749 384h2v2h-2zM750 382h2v2h-2zM757 577h2v2h-2zM758 618h2v2h-2zM759 646h2v2h-2zM759 669h2v2h-2zM760 699h2v2h-2zM761 708h2v2h-2zM763 718h2v2h-2zM763 722h2v2h-2zM764 725h2v2h-2zM765 729h2v2h-2zM766 733h2v2h-2zM767 736h2v2h-2zM768 740h2v2h-2zM769 741h2v2h-2zM770 741h2v2h-2zM771 742h2v2h-2zM772 742h2v2h-2zM773 743h2v2h-2zM774 743h2v2h-2zM856 424h2v2h-2zM857 418h2v2h-2zM858 412h2v2h-2zM858 408h2v2h-2zM859 406h2v2h-2zM860 403h2v2h-2zM861 401h2v2h-2zM862 399h2v2h-2zM863 396h2v2h-2zM864 395h2v2h-2zM865 394h2v2h-2zM866 394h2v2h-2zM867 394h2v2h-2zM868 393h2v2h-2zM869 393h2v2h-2zM870 393h2v2h-2zM871 393h2v2h-2zM872 393h2v2h-2zM815 443h2v2h-2zM816 445h2v2h-2zM817 446h2v2h-2zM817 447h2v2h-2zM818 447h2v2h-2zM819 447h2v2h-2zM820 448h2v2h-2zM821 448h2v2h-2zM822 447h2v2h-2zM879 537h2v2h-2zM880 561h2v2h-2zM881 584h2v2h-2zM882 585h2v2h-2zM883 587h2v2h-2zM884 588h2v2h-2zM885 588h2v2h-2zM886 589h2v2h-2zM887 589h2v2h-2zM888 590h2v2h-2zM889 590h2v2h-2zM889 591h2v2h-2zM890 591h2v2h-2zM891 592h2v2h-2zM892 592h2v2h-2zM893 593h2v2h-2zM894 593h2v2h-2zM895 593h2v2h-2zM896 593h2v2h-2zM897 593h2v2h-2zM898 593h2v2h-2zM899 593h2v2h-2zM900 593h2v2h-2zM901 593h2v2h-2zM902 593h2v2h-2zM903 593h2v2h-2zM904 593h2v2h-2zM905 593h2v2h-2zM906 593h2v2h-2zM907 593h2v2h-2zM908 593h2v2h-2zM909 593h2v2h-2zM910 593h2v2h-2zM911 593h2v2h-2zM912 593h2v2h-2zM913 593h2v2h-2zM914 593h2v2h-2zM915 593h2v2h-2zM916 593h2v2h-2zM917 593h2v2h-2zM918 593h2v2h-2zM919 593h2v2h-2zM920 593h2v2h-2zM921 593h2v2h-2zM922 593h2v2h-2zM923 593h2v2h-2zM924 593h2v2h-2zM925 593h2v2h-2zM926 593h2v2h-2zM927 593h2v2h-2zM928 593h2v2h-2zM929 593h2v2h-2zM930 593h2v2h-2zM931 593h2v2h-2zM932 593h2v2h-2zM933 593h2v2h-2zM934 593h2v2h-2zM935 593h2v2h-2zM936 593h2v2h-2zM937 593h2v2h-2zM938 593h2v2h-2zM939 593h2v2h-2zM940 593h2v2h-2zM941 593h2v2h-2zM942 593h2v2h-2zM943 593h2v2h-2zM944 593h2v2h-2zM945 593h2v2h-2zM946 593h2v2h-2zM947 593h2v2h-2zM948 593h2v2h-2zM949 593h2v2h-2zM950 593h2v2h-2zM951 593h2v2h-2zM952 593h2v2h-2zM953 593h2v2h-2zM954 593h2v2h-2zM955 596h2v2h-2zM956 599h2v2h-2zM957 601h2v2h-2zM958 604h2v2h-2zM958 607h2v2h-2zM960 658h2v2h-2zM961 675h2v2h-2zM962 697h2v2h-2zM962 709h2v2h-2zM963 721h2v2h-2zM964 729h2v2h-2zM965 735h2v2h-2zM965 740h2v2h-2zM966 744h2v2h-2zM967 747h2v2h-2zM968 750h2v2h-2zM969 751h2v2h-2zM970 752h2v2h-2zM971 753h2v2h-2zM972 754h2v2h-2zM973 755h2v2h-2zM974 755h2v2h-2zM975 756h2v2h-2zM979 701h2v2h-2zM980 698h2v2h-2zM981 695h2v2h-2zM982 694h2v2h-2zM983 693h2v2h-2zM984 692h2v2h-2zM985 691h2v2h-2zM986 690h2v2h-2zM987 692h2v2h-2zM987 693h2v2h-2zM988 694h2v2h-2zM989 695h2v2h-2zM990 696h2v2h-2zM991 698h2v2h-2zM992 693h2v2h-2zM993 692h2v2h-2zM994 692h2v2h-2zM995 691h2v2h-2zM996 690h2v2h-2zM997 689h2v2h-2zM998 686h2v2h-2zM999 684h2v2h-2zM1000 682h2v2h-2zM1001 680h2v2h-2zM1002 678h2v2h-2zM1003 676h2v2h-2zM1013 121h2v2h-2zM1013 111h2v2h-2zM1015 106h2v2h-2zM1016 103h2v2h-2zM1017 100h2v2h-2zM1018 99h2v2h-2zM1019 97h2v2h-2zM1020 95h2v2h-2zM1021 95h2v2h-2zM1022 95h2v2h-2zM1023 95h2v2h-2zM1024 94h2v2h-2zM1025 94h2v2h-2zM1026 94h2v2h-2zM1027 94h2v2h-2zM1028 94h2v2h-2zM1029 95h2v2h-2zM1030 95h2v2h-2zM1031 97h2v2h-2zM1032 99h2v2h-2zM1033 99h2v2h-2zM1034 99h2v2h-2zM1035 100h2v2h-2zM1036 100h2v2h-2zM1037 101h2v2h-2zM1038 101h2v2h-2zM1039 101h2v2h-2zM1040 101h2v2h-2zM1041 101h2v2h-2zM1042 101h2v2h-2zM1043 101h2v2h-2zM1044 101h2v2h-2zM1045 101h2v2h-2zM1046 101h2v2h-2zM1047 101h2v2h-2zM1048 101h2v2h-2zM1049 101h2v2h-2zM1050 101h2v2h-2zM1051 101h2v2h-2zM1052 101h2v2h-2zM1053 101h2v2h-2zM1054 101h2v2h-2zM1055 101h2v2h-2zM1056 101h2v2h-2zM1057 101h2v2h-2zM1058 101h2v2h-2zM1059 101h2v2h-2zM1060 101h2v2h-2zM1061 101h2v2h-2zM1062 101h2v2h-2zM1063 101h2v2h-2zM1064 101h2v2h-2zM1065 101h2v2h-2zM1066 101h2v2h-2zM1067 101h2v2h-2zM1068 99h2v2h-2zM1069 97h2v2h-2zM1070 95h2v2h-2zM1071 91h2v2h-2zM1072 89h2v2h-2zM1073 86h2v2h-2zM1074 86h2v2h-2zM1075 85h2v2h-2zM1076 85h2v2h-2zM1077 84h2v2h-2zM1078 83h2v2h-2zM1079 82h2v2h-2zM1080 81h2v2h-2zM1081 80h2v2h-2zM1092 650h2v2h-2zM1093 663h2v2h-2zM1094 677h2v2h-2zM1095 686h2v2h-2zM1096 692h2v2h-2zM1097 700h2v2h-2zM1098 703h2v2h-2zM1099 706h2v2h-2zM1100 708h2v2h-2zM1101 710h2v2h-2zM1101 711h2v2h-2zM1102 712h2v2h-2zM1103 713h2v2h-2zM1104 714h2v2h-2zM1105 715h2v2h-2zM1106 715h2v2h-2zM1107 716h2v2h-2zM1108 716h2v2h-2zM1111 747h2v2h-2zM1111 748h2v2h-2zM1112 749h2v2h-2zM1113 750h2v2h-2zM1114 751h2v2h-2zM1115 751h2v2h-2zM1116 752h2v2h-2zM1116 753h2v2h-2zM1117 754h2v2h-2zM1118 755h2v2h-2zM1119 756h2v2h-2zM1120 756h2v2h-2zM1121 756h2v2h-2zM1122 756h2v2h-2zM1123 756h2v2h-2zM1124 756h2v2h-2zM1125 756h2v2h-2zM1126 756h2v2h-2zM1127 757h2v2h-2zM1128 757h2v2h-2zM1129 757h2v2h-2zM1130 757h2v2h-2zM1131 757h2v2h-2zM1132 757h2v2h-2zM1133 757h2v2h-2zM1134 757h2v2h-2zM1135 757h2v2h-2zM1136 757h2v2h-2zM1137 757h2v2h-2zM1138 757h2v2h-2zM1139 757h2v2h-2zM1140 757h2v2h-2zM1141 757h2v2h-2zM1142 757h2v2h-2zM1143 757h2v2h-2zM1144 757h2v2h-2zM1145 757h2v2h-2zM1146 757h2v2h-2zM1147 757h2v2h-2zM1148 757h2v2h-2zM1149 757h2v2h-2zM1150 757h2v2h-2zM1151 757h2v2h-2zM1152 757h2v2h-2zM1153 757h2v2h-2zM1154 757h2v2h-2zM1155 757h2v2h-2zM1156 757h2v2h-2zM1157 757h2v2h-2zM1158 757h2v2h-2zM1159 757h2v2h-2zM1160 757h2v2h-2zM1161 757h2v2h-2zM1162 757h2v2h-2zM1163 757h2v2h-2zM1164 757h2v2h-2zM1165 757h2v2h-2zM1166 757h2v2h-2zM1167 757h2v2h-2zM1168 757h2v2h-2zM1169 757h2v2h-2zM1170 757h2v2h-2zM1171 757h2v2h-2zM1172 757h2v2h-2zM1173 757h2v2h-2zM1174 757h2v2h-2zM1175 757h2v2h-2zM1176 757h2v2h-2zM1192 671h2v2h-2zM1192 693h2v2h-2zM1193 710h2v2h-2zM1194 722h2v2h-2zM1195 733h2v2h-2zM1196 741h2v2h-2zM1197 751h2v2h-2zM1198 755h2v2h-2zM1199 759h2v2h-2zM1200 760h2v2h-2zM1201 761h2v2h-2zM1202 762h2v2h-2zM1203 764h2v2h-2zM1204 765h2v2h-2zM1238 360h2v2h-2zM1239 379h2v2h-2zM1241 399h2v2h-2zM1242 445h2v2h-2zM1243 468h2v2h-2zM1244 480h2v2h-2zM1245 491h2v2h-2zM1246 494h2v2h-2zM1247 497h2v2h-2zM1248 500h2v2h-2zM1249 502h2v2h-2zM1250 505h2v2h-2zM1251 506h2v2h-2zM1252 506h2v2h-2zM1253 507h2v2h-2zM1254 507h2v2h-2zM1255 508h2v2h-2zM1256 508h2v2h-2zM1257 509h2v2h-2zM1258 509h2v2h-2zM1259 510h2v2h-2zM1260 510h2v2h-2zM1261 510h2v2h-2zM1261 511h2v2h-2zM1265 659h2v2h-2zM1266 680h2v2h-2zM1266 699h2v2h-2zM1266 712h2v2h-2zM1267 717h2v2h-2zM1268 722h2v2h-2zM1269 730h2v2h-2zM1270 738h2v2h-2zM1271 753h2v2h-2zM1227 83h2v2h-2zM1227 78h2v2h-2zM1227 73h2v2h-2zM1228 70h2v2h-2zM1229 67h2v2h-2zM1230 64h2v2h-2zM1231 63h2v2h-2zM1232 61h2v2h-2zM1233 66h2v2h-2zM1234 67h2v2h-2zM1235 68h2v2h-2zM1236 70h2v2h-2zM1237 71h2v2h-2zM1300 93h2v2h-2zM1301 91h2v2h-2zM1302 89h2v2h-2zM1303 88h2v2h-2zM1304 86h2v2h-2z" fill="#808080"/>
<rect x="165" y="162" width="2" height="2" fill="#808080"/>
<rect x="181" y="179" width="2" height="2" fill="#808080"/>
<rect x="165" y="192" width="2" height="2" fill="#808080"/>
<rect x="180" y="215" width="2" height="2" fill="#808080"/>
<rect x="164" y="236" width="2" height="2" fill="#808080"/>
<rect x="179" y="265" width="2" height="2" fill="#808080"/>
<rect x="163" y="284" width="2" height="2" fill="#808080"/>
<rect x="163" y="284" width="2" height="2" fill="#808080"/>
<rect x="178" y="321" width="2" height="2" fill="#808080"/>
<rect x="162" y="366" width="2" height="2" fill="#808080"/>
<rect x="166" y="374" width="2" height="2" fill="#808080"/>
<rect x="182" y="387" width="2" height="2" fill="#808080"/>
<rect x="178" y="418" width="2" height="2" fill="#808080"/>
<rect x="161" y="427" width="2" height="2" fill="#808080"/>
<rect x="167" y="434" width="2" height="2" fill="#808080"/>
<rect x="182" y="444" width="2" height="2" fill="#808080"/>
<rect x="177" y="489" width="2" height="2" fill="#808080"/>
<rect x="168" y="509" width="2" height="2" fill="#808080"/>
<rect x="183" y="533" width="2" height="2" fill="#808080"/>
<rect x="169" y="555" width="2" height="2" fill="#808080"/>
<rect x="295" y="281" width="2" height="2" fill="#808080"/>
<rect x="295" y="337" width="2" height="2" fill="#808080"/>
<rect x="294" y="433" width="2" height="2" fill="#808080"/>
<rect x="293" y="504" width="2" height="2" fill="#808080"/>
<rect x="334" y="307" width="2" height="2" fill="#808080"/>
<rect x="334" y="377" width="2" height="2" fill="#808080"/>
<rect x="335" y="468" width="2" height="2" fill="#808080"/>
<rect x="336" y="521" width="2" height="2" fill="#808080"/>
<rect x="170" y="625" width="2" height="2" fill="#808080"/>
<rect x="185" y="627" width="2" height="2" fill="#808080"/>
<rect x="171" y="648" width="2" height="2" fill="#808080"/>
<rect x="186" y="658" width="2" height="2" fill="#808080"/>
<rect x="172" y="665" width="2" height="2" fill="#808080"/>
<rect x="173" y="679" width="2" height="2" fill="#808080"/>
<rect x="187" y="683" width="2" height="2" fill="#808080"/>
<rect x="173" y="688" width="2" height="2" fill="#808080"/>
<rect x="174" y="697" width="2" height="2" fill="#808080"/>
<rect x="175" y="703" width="2" height="2" fill="#808080"/>
<rect x="176" y="708" width="2" height="2" fill="#808080"/>
<rect x="187" y="718" width="2" height="2" fill="#808080"/>
<rect x="189" y="729" width="2" height="2" fill="#808080"/>
<rect x="190" y="738" width="2" height="2" fill="#808080"/>
<rect x="191" y="744" width="2" height="2" fill="#808080"/>
<rect x="191" y="750" width="2" height="2" fill="#808080"/>
<rect x="192" y="754" width="2" height="2" fill="#808080"/>
<rect x="187" y="703" width="2" height="2" fill="#808080"/>
<rect x="337" y="606" width="2" height="2" fill="#808080"/>
<rect x="337" y="570" width="2" height="2" fill="#808080"/>
<rect x="463" y="147" width="2" height="2" fill="#808080"/>
<rect x="462" y="175" width="2" height="2" fill="#808080"/>
<rect x="461" y="209" width="2" height="2" fill="#808080"/>
<rect x="460" y="259" width="2" height="2" fill="#808080"/>
<rect x="460" y="311" width="2" height="2" fill="#808080"/>
<rect x="492" y="346" width="2" height="2" fill="#808080"/>
<rect x="464" y="363" width="2" height="2" fill="#808080"/>
<rect x="459" y="407" width="2" height="2" fill="#808080"/>
<rect x="601" y="294" width="2" height="2" fill="#808080"/>
<rect x="602" y="371" width="2" height="2" fill="#808080"/>
<rect x="661" y="323" width="2" height="2" fill="#808080"/>
<rect x="459" y="407" width="2" height="2" fill="#808080"/>
<rect x="464" y="426" width="2" height="2" fill="#808080"/>
<rect x="458" y="471" width="2" height="2" fill="#808080"/>
<rect x="465" y="518" width="2" height="2" fill="#808080"/>
<rect x="491" y="450" width="2" height="2" fill="#808080"/>
<rect x="493" y="496" width="2" height="2" fill="#808080"/>
<rect x="495" y="532" width="2" height="2" fill="#808080"/>
<rect x="494" y="596" width="2" height="2" fill="#808080"/>
<rect x="587" y="431" width="2" height="2" fill="#808080"/>
<rect x="587" y="504" width="2" height="2" fill="#808080"/>
<rect x="603" y="525" width="2" height="2" fill="#808080"/>
<rect x="604" y="598" width="2" height="2" fill="#808080"/>
<rect x="659" y="419" width="2" height="2" fill="#808080"/>
<rect x="662" y="490" width="2" height="2" fill="#808080"/>
<rect x="665" y="582" width="2" height="2" fill="#808080"/>
<rect x="661" y="473" width="2" height="2" fill="#808080"/>
<rect x="466" y="618" width="2" height="2" fill="#808080"/>
<rect x="495" y="629" width="2" height="2" fill="#808080"/>
<rect x="468" y="651" width="2" height="2" fill="#808080"/>
<rect x="497" y="659" width="2" height="2" fill="#808080"/>
<rect x="468" y="679" width="2" height="2" fill="#808080"/>
<rect x="498" y="682" width="2" height="2" fill="#808080"/>
<rect x="458" y="693" width="2" height="2" fill="#808080"/>
<rect x="555" y="639" width="2" height="2" fill="#808080"/>
<rect x="556" y="670" width="2" height="2" fill="#808080"/>
<rect x="605" y="637" width="2" height="2" fill="#808080"/>
<rect x="606" y="658" width="2" height="2" fill="#808080"/>
<rect x="608" y="673" width="2" height="2" fill="#808080"/>
<rect x="610" y="687" width="2" height="2" fill="#808080"/>
<rect x="754" y="211" width="2" height="2" fill="#808080"/>
<rect x="753" y="253" width="2" height="2" fill="#808080"/>
<rect x="752" y="303" width="2" height="2" fill="#808080"/>
<rect x="1009" y="120" width="2" height="2" fill="#808080"/>
<rect x="1010" y="152" width="2" height="2" fill="#808080"/>
<rect x="1010" y="171" width="2" height="2" fill="#808080"/>
<rect x="1009" y="190" width="2" height="2" fill="#808080"/>
<rect x="1008" y="223" width="2" height="2" fill="#808080"/>
<rect x="1007" y="274" width="2" height="2" fill="#808080"/>
<rect x="1006" y="323" width="2" height="2" fill="#808080"/>
<rect x="754" y="403" width="2" height="2" fill="#808080"/>
<rect x="755" y="453" width="2" height="2" fill="#808080"/>
<rect x="810" y="355" width="2" height="2" fill="#808080"/>
<rect x="809" y="367" width="2" height="2" fill="#808080"/>
<rect x="811" y="369" width="2" height="2" fill="#808080"/>
<rect x="808" y="375" width="2" height="2" fill="#808080"/>
<rect x="801" y="401" width="2" height="2" fill="#808080"/>
<rect x="807" y="400" width="2" height="2" fill="#808080"/>
<rect x="805" y="403" width="2" height="2" fill="#808080"/>
<rect x="811" y="402" width="2" height="2" fill="#808080"/>
<rect x="802" y="409" width="2" height="2" fill="#808080"/>
<rect x="803" y="411" width="2" height="2" fill="#808080"/>
<rect x="797" y="413" width="2" height="2" fill="#808080"/>
<rect x="794" y="416" width="2" height="2" fill="#808080"/>
<rect x="792" y="419" width="2" height="2" fill="#808080"/>
<rect x="792" y="421" width="2" height="2" fill="#808080"/>
<rect x="798" y="422" width="2" height="2" fill="#808080"/>
<rect x="812" y="418" width="2" height="2" fill="#808080"/>
<rect x="789" y="428" width="2" height="2" fill="#808080"/>
<rect x="800" y="427" width="2" height="2" fill="#808080"/>
<rect x="790" y="436" width="2" height="2" fill="#808080"/>
<rect x="796" y="434" width="2" height="2" fill="#808080"/>
<rect x="802" y="434" width="2" height="2" fill="#808080"/>
<rect x="813" y="435" width="2" height="2" fill="#808080"/>
<rect x="798" y="443" width="2" height="2" fill="#808080"/>
<rect x="815" y="443" width="2" height="2" fill="#808080"/>
<rect x="817" y="446" width="2" height="2" fill="#808080"/>
<rect x="820" y="448" width="2" height="2" fill="#808080"/>
<rect x="822" y="447" width="2" height="2" fill="#808080"/>
<rect x="828" y="447" width="2" height="2" fill="#808080"/>
<rect x="788" y="447" width="2" height="2" fill="#808080"/>
<rect x="799" y="459" width="2" height="2" fill="#808080"/>
<rect x="788" y="467" width="2" height="2" fill="#808080"/>
<rect x="826" y="396" width="2" height="2" fill="#808080"/>
<rect x="825" y="402" width="2" height="2" fill="#808080"/>
<rect x="829" y="405" width="2" height="2" fill="#808080"/>
<rect x="832" y="404" width="2" height="2" fill="#808080"/>
<rect x="824" y="409" width="2" height="2" fill="#808080"/>
<rect x="828" y="409" width="2" height="2" fill="#808080"/>
<rect x="831" y="413" width="2" height="2" fill="#808080"/>
<rect x="824" y="419" width="2" height="2" fill="#808080"/>
<rect x="827" y="430" width="2" height="2" fill="#808080"/>
<rect x="823" y="432" width="2" height="2" fill="#808080"/>
<rect x="842" y="353" width="2" height="2" fill="#808080"/>
<rect x="841" y="360" width="2" height="2" fill="#808080"/>
<rect x="841" y="365" width="2" height="2" fill="#808080"/>
<rect x="843" y="372" width="2" height="2" fill="#808080"/>
<rect x="834" y="377" width="2" height="2" fill="#808080"/>
<rect x="833" y="386" width="2" height="2" fill="#808080"/>
<rect x="840" y="382" width="2" height="2" fill="#808080"/>
<rect x="844" y="381" width="2" height="2" fill="#808080"/>
<rect x="845" y="390" width="2" height="2" fill="#808080"/>
<rect x="839" y="396" width="2" height="2" fill="#808080"/>
<rect x="846" y="396" width="2" height="2" fill="#808080"/>
<rect x="846" y="401" width="2" height="2" fill="#808080"/>
<rect x="847" y="411" width="2" height="2" fill="#808080"/>
<rect x="848" y="414" width="2" height="2" fill="#808080"/>
<rect x="849" y="418" width="2" height="2" fill="#808080"/>
<rect x="850" y="422" width="2" height="2" fill="#808080"/>
<rect x="835" y="428" width="2" height="2" fill="#808080"/>
<rect x="837" y="429" width="2" height="2" fill="#808080"/>
<rect x="838" y="433" width="2" height="2" fill="#808080"/>
<rect x="836" y="437" width="2" height="2" fill="#808080"/>
<rect x="855" y="438" width="2" height="2" fill="#808080"/>
<rect x="851" y="451" width="2" height="2" fill="#808080"/>
<rect x="854" y="448" width="2" height="2" fill="#808080"/>
<rect x="852" y="464" width="2" height="2" fill="#808080"/>
<rect x="872" y="406" width="2" height="2" fill="#808080"/>
<rect x="873" y="416" width="2" height="2" fill="#808080"/>
<rect x="874" y="424" width="2" height="2" fill="#808080"/>
<rect x="875" y="430" width="2" height="2" fill="#808080"/>
<rect x="739" y="465" width="2" height="2" fill="#808080"/>
<rect x="738" y="482" width="2" height="2" fill="#808080"/>
<rect x="736" y="490" width="2" height="2" fill="#808080"/>
<rect x="799" y="459" width="2" height="2" fill="#808080"/>
<rect x="788" y="467" width="2" height="2" fill="#808080"/>
<rect x="852" y="464" width="2" height="2" fill="#808080"/>
<rect x="853" y="479" width="2" height="2" fill="#808080"/>
<rect x="784" y="394" width="2" height="2" fill="#808080"/>
<rect x="784" y="454" width="2" height="2" fill="#808080"/>
<rect x="782" y="496" width="2" height="2" fill="#808080"/>
<rect x="780" y="570" width="2" height="2" fill="#808080"/>
<rect x="782" y="625" width="2" height="2" fill="#808080"/>
<rect x="1006" y="417" width="2" height="2" fill="#808080"/>
<rect x="1005" y="482" width="2" height="2" fill="#808080"/>
<rect x="1181" y="227" width="2" height="2" fill="#808080"/>
<rect x="1180" y="282" width="2" height="2" fill="#808080"/>
<rect x="1187" y="320" width="2" height="2" fill="#808080"/>
<rect x="1179" y="342" width="2" height="2" fill="#808080"/>
<rect x="1188" y="393" width="2" height="2" fill="#808080"/>
<rect x="1221" y="229" width="2" height="2" fill="#808080"/>
<rect x="1220" y="286" width="2" height="2" fill="#808080"/>
<rect x="1219" y="346" width="2" height="2" fill="#808080"/>
<rect x="1237" y="260" width="2" height="2" fill="#808080"/>
<rect x="1238" y="323" width="2" height="2" fill="#808080"/>
<rect x="1239" y="359" width="2" height="2" fill="#808080"/>
<rect x="1240" y="399" width="2" height="2" fill="#808080"/>
<rect x="1294" y="244" width="2" height="2" fill="#808080"/>
<rect x="1277" y="267" width="2" height="2" fill="#808080"/>
<rect x="1275" y="285" width="2" height="2" fill="#808080"/>
<rect x="1293" y="289" width="2" height="2" fill="#808080"/>
<rect x="1306" y="306" width="2" height="2" fill="#808080"/>
<rect x="1310" y="331" width="2" height="2" fill="#808080"/>
<rect x="1287" y="339" width="2" height="2" fill="#808080"/>
<rect x="1273" y="342" width="2" height="2" fill="#808080"/>
<rect x="1292" y="375" width="2" height="2" fill="#808080"/>
<rect x="1082" y="295" width="2" height="2" fill="#808080"/>
<rect x="1083" y="367" width="2" height="2" fill="#808080"/>
<rect x="1088" y="375" width="2" height="2" fill="#808080"/>
<rect x="1084" y="367" width="2" height="2" fill="#808080"/>
<rect x="1087" y="375" width="2" height="2" fill="#808080"/>
<rect x="1087" y="426" width="2" height="2" fill="#808080"/>
<rect x="1084" y="497" width="2" height="2" fill="#808080"/>
<rect x="1088" y="519" width="2" height="2" fill="#808080"/>
<rect x="1085" y="542" width="2" height="2" fill="#808080"/>
<rect x="1089" y="551" width="2" height="2" fill="#808080"/>
<rect x="1087" y="606" width="2" height="2" fill="#808080"/>
<rect x="1187" y="392" width="2" height="2" fill="#808080"/>
<rect x="1187" y="494" width="2" height="2" fill="#808080"/>
<rect x="1189" y="551" width="2" height="2" fill="#808080"/>
<rect x="1190" y="605" width="2" height="2" fill="#808080"/>
<rect x="1187" y="319" width="2" height="2" fill="#808080"/>
<rect x="1178" y="341" width="2" height="2" fill="#808080"/>
<rect x="1178" y="443" width="2" height="2" fill="#808080"/>
<rect x="1178" y="521" width="2" height="2" fill="#808080"/>
<rect x="1218" y="346" width="2" height="2" fill="#808080"/>
<rect x="1218" y="450" width="2" height="2" fill="#808080"/>
<rect x="1217" y="528" width="2" height="2" fill="#808080"/>
<rect x="1272" y="341" width="2" height="2" fill="#808080"/>
<rect x="1291" y="376" width="2" height="2" fill="#808080"/>
<rect x="1289" y="427" width="2" height="2" fill="#808080"/>
<rect x="1275" y="464" width="2" height="2" fill="#808080"/>
<rect x="1272" y="519" width="2" height="2" fill="#808080"/>
<rect x="1289" y="537" width="2" height="2" fill="#808080"/>
<rect x="1289" y="588" width="2" height="2" fill="#808080"/>
<rect x="1264" y="595" width="2" height="2" fill="#808080"/>
<rect x="1291" y="631" width="2" height="2" fill="#808080"/>
<rect x="1264" y="624" width="2" height="2" fill="#808080"/>
<rect x="1087" y="605" width="2" height="2" fill="#808080"/>
<rect x="1092" y="625" width="2" height="2" fill="#808080"/>
<rect x="1004" y="699" width="2" height="2" fill="#808080"/>
<rect x="679" y="686" width="2" height="2" fill="#808080"/>
<rect x="605" y="610" width="2" height="2" fill="#808080"/>
<rect x="606" y="638" width="2" height="2" fill="#808080"/>
<rect x="607" y="659" width="2" height="2" fill="#808080"/>
<rect x="607" y="675" width="2" height="2" fill="#808080"/>
<rect x="733" y="699" width="2" height="2" fill="#808080"/>
<rect x="734" y="616" width="2" height="2" fill="#808080"/>
<rect x="758" y="619" width="2" height="2" fill="#808080"/>
<rect x="759" y="647" width="2" height="2" fill="#808080"/>
<rect x="759" y="670" width="2" height="2" fill="#808080"/>
<rect x="761" y="701" width="2" height="2" fill="#808080"/>
<rect x="762" y="709" width="2" height="2" fill="#808080"/>
<rect x="763" y="720" width="2" height="2" fill="#808080"/>
<rect x="763" y="730" width="2" height="2" fill="#808080"/>
<rect x="440" y="696" width="2" height="2" fill="#808080"/>
<rect x="457" y="693" width="2" height="2" fill="#808080"/>
<rect x="467" y="619" width="2" height="2" fill="#808080"/>
<rect x="468" y="652" width="2" height="2" fill="#808080"/>
<rect x="468" y="679" width="2" height="2" fill="#808080"/>
<rect x="495" y="629" width="2" height="2" fill="#808080"/>
<rect x="496" y="660" width="2" height="2" fill="#808080"/>
<rect x="497" y="682" width="2" height="2" fill="#808080"/>
<rect x="1186" y="92" width="2" height="2" fill="#808080"/>
<rect x="1185" y="103" width="2" height="2" fill="#808080"/>
<rect x="1184" y="116" width="2" height="2" fill="#808080"/>
<rect x="1184" y="134" width="2" height="2" fill="#808080"/>
<rect x="1183" y="157" width="2" height="2" fill="#808080"/>
<rect x="1182" y="189" width="2" height="2" fill="#808080"/>
<rect x="1226" y="92" width="2" height="2" fill="#808080"/>
<rect x="1225" y="103" width="2" height="2" fill="#808080"/>
<rect x="1224" y="116" width="2" height="2" fill="#808080"/>
<rect x="1223" y="136" width="2" height="2" fill="#808080"/>
<rect x="1222" y="159" width="2" height="2" fill="#808080"/>
<rect x="1222" y="190" width="2" height="2" fill="#808080"/>
<rect x="1236" y="213" width="2" height="2" fill="#808080"/>
<rect x="1284" y="86" width="2" height="2" fill="#808080"/>
<rect x="1285" y="85" width="2" height="2" fill="#808080"/>
<rect x="1282" y="96" width="2" height="2" fill="#808080"/>
<rect x="1282" y="110" width="2" height="2" fill="#808080"/>
<rect x="1281" y="125" width="2" height="2" fill="#808080"/>
<rect x="1279" y="143" width="2" height="2" fill="#808080"/>
<rect x="1279" y="174" width="2" height="2" fill="#808080"/>
<rect x="1279" y="198" width="2" height="2" fill="#808080"/>
<rect x="1304" y="86" width="2" height="2" fill="#808080"/>
<rect x="1300" y="93" width="2" height="2" fill="#808080"/>
<rect x="1299" y="95" width="2" height="2" fill="#808080"/>
<rect x="1305" y="73" width="2" height="2" fill="#808080"/>
<rect x="1305" y="76" width="2" height="2" fill="#808080"/>
<rect x="1299" y="103" width="2" height="2" fill="#808080"/>
<rect x="1298" y="114" width="2" height="2" fill="#808080"/>
<rect x="1297" y="127" width="2" height="2" fill="#808080"/>
<rect x="1296" y="146" width="2" height="2" fill="#808080"/>
<rect x="1296" y="171" width="2" height="2" fill="#808080"/>
<rect x="1295" y="201" width="2" height="2" fill="#808080"/>
<rect x="1319" y="66" width="2" height="2" fill="#808080"/>
<rect x="1318" y="71" width="2" height="2" fill="#808080"/>
<rect x="1318" y="74" width="2" height="2" fill="#808080"/>
<rect x="1317" y="80" width="2" height="2" fill="#808080"/>
<rect x="1316" y="87" width="2" height="2" fill="#808080"/>
<rect x="1315" y="96" width="2" height="2" fill="#808080"/>
<rect x="1314" y="106" width="2" height="2" fill="#808080"/>
<rect x="1309" y="122" width="2" height="2" fill="#808080"/>
<rect x="1309" y="127" width="2" height="2" fill="#808080"/>
<rect x="1313" y="137" width="2" height="2" fill="#808080"/>
<rect x="1307" y="145" width="2" height="2" fill="#808080"/>
<rect x="1311" y="170" width="2" height="2" fill="#808080"/>
<rect x="1308" y="172" width="2" height="2" fill="#808080"/>
<rect x="1312" y="186" width="2" height="2" fill="#808080"/>
<path d="M151.5 767H151.5V743H152.5V756H152.5V767H153.5V739H154.5V710H155.5V739H156.5V767V767 M161.5 767H161.5V756H162.5V743H166.5V739H167.5V710H168.5V739H169.5V710H170.5V739H170.5V743H171.5V756H172.5V743H173.5V756H173.5V743H174.5V756H175.5V767V767 M177.5 767H177.5V739H178.5V710H179.5V739H180.5V767V767 M182.5 767H182.5V756H183.5V743H184.5V767V767 M186.5 767H186.5V756H187.5V743H188.5V756H189.5V767V767 M192.5 767H192.5V756H193.5V727H194.5V710H195.5V727H196.5V743H196.5V710H197.5V710H198.5V743H199.5V767V767 M203.5 767H203.5V756H205.5V739H206.5V727H206.5V710H207.5V739H208.5V743H209.5V767H210.5V743H211.5V756H212.5V743H212.5V756H213.5V767V767 M223.5 767H223.5V743H225.5V756H226.5V767V767 M245.5 767H245.5V756H246.5V727H247.5V710H248.5V740H248.5V756H249.5V767V767 M266.5 767H266.5V740H267.5V710H268.5V740H268.5V767V767 M281.5 767H281.5V740H282.5V710H283.5V740H283.5V727H284.5V740H286.5V710H287.5V710H288.5V727H288.5V740H289.5V767H292.5V740H293.5V710H294.5V727H296.5V767V767 M334.5 767H334.5V740H335.5V710H336.5V740H337.5V740H339.5V710H339.5V740H341.5V743H342.5V756H343.5V767V767 M357.5 767H357.5V743H358.5V756H359.5V767V767 M396.5 767H396.5V740H397.5V710H397.5V740H398.5V767V767 M404.5 767H404.5V756H404.5V743H406.5V767V767 M556.5 767H556.5V740H558.5V710H560.5V740H561.5V767V767 M573.5 767H573.5V756H573.5V743H574.5V767V767 M583.5 767H583.5V756H584.5V743H586.5V740H586.5V710H587.5V727H588.5V756H589.5V767V767 M595.5 767H595.5V740H596.5V710H597.5V740H598.5V767H601.5V740H602.5V710H603.5V727H604.5V710H604.5V727H605.5V743H606.5V756H607.5V767H608.5V710H609.5V740H610.5V756H611.5V710H612.5V710H613.5V727H614.5V740H615.5V756H616.5V710H617.5V727H618.5V743H622.5V743H623.5V767H625.5V743H626.5V756H627.5V743H628.5V743H629.5V756H630.5V767H635.5V743H636.5V756H638.5V767V767 M640.5 767H640.5V740H641.5V710H642.5V727H644.5V710H645.5V743H647.5V710H648.5V727H649.5V710H650.5V740H651.5V767H656.5V740H657.5V710H658.5V727H659.5V710H660.5V740H661.5V756H663.5V743H667.5V727H668.5V698H669.5V683H669.5V698H670.5V710H671.5V683H672.5V698H673.5V727H675.5V743H683.5V727H685.5V710H686.5V740H687.5V756H688.5V767H692.5V740H693.5V710H694.5V740H695.5V767H699.5V740H700.5V710H701.5V727H703.5V743H704.5V756H705.5V743H706.5V756H707.5V740H708.5V710H709.5V727H710.5V710H711.5V710H712.5V740H713.5V767V767 M727.5 767H727.5V756H728.5V743H729.5V767H733.5V756H735.5V743H738.5V727H739.5V710H740.5V727V767 M735.5 767H735.5V727H738.5V710H739.5V727H740.5V710H741.5V727H743.5V743H745.5V756H745.5V767H748.5V740H749.5V710H751.5V756H752.5V767H753.5V756H754.5V727H755.5V710H757.5V727H758.5V710H759.5V743H760.5V710H764.5V740H764.5V767V767 M779.5 767H779.5V740H780.5V710H781.5V727H783.5V710H784.5V727H786.5V710H790.5V727H791.5V743H792.5V727H793.5V710H794.5V727H795.5V756H796.5V740H799.5V710H800.5V683H803.5V698H804.5V743H805.5V756H807.5V767H811.5V740H813.5V710H814.5V740H815.5V710H816.5V756H817.5V767H823.5V756H825.5V727H826.5V710H828.5V698H829.5V683H830.5V710H833.5V683H834.5V714H835.5V727H836.5V767H838.5V710H839.5V727H840.5V767H843.5V740H844.5V710H845.5V743H848.5V756H849.5V743H851.5V710H852.5V727H853.5V743H854.5V710H856.5V756H858.5V740H859.5V710H860.5V767V767 M873.5 767H873.5V710H874.5V727H875.5V756H876.5V767V767 M960.5 767H960.5V756H962.5V743H963.5V756H964.5V767V767 M975.5 767H975.5V756H977.5V743H978.5V710H978.5V740H979.5V767H981.5V756H983.5V727H984.5V710H985.5V740H986.5V727H987.5V710H988.5V740H989.5V767H993.5V740H994.5V710H995.5V767H1000.5V756H1001.5V743H1003.5V756H1004.5V767H1005.5V743H1007.5V727H1008.5V710H1009.5V727H1010.5V710H1012.5V710H1013.5V740H1014.5V710H1016.5V740H1018.5V727H1019.5V710H1021.5V727H1022.5V756H1023.5V767H1026.5V740H1027.5V710H1029.5V727H1030.5V710H1032.5V740H1033.5V710H1034.5V740H1035.5V756H1037.5V767H1040.5V743H1041.5V727H1042.5V710H1043.5V767V767 M1053.5 767H1053.5V756H1054.5V743H1055.5V767H1060.5V756H1062.5V743H1063.5V756H1064.5V743H1068.5V743H1070.5V727H1071.5V710H1072.5V740H1073.5V767H1081.5V756H1082.5V743H1084.5V740H1085.5V710H1087.5V743H1088.5V727H1089.5V710H1090.5V756H1092.5V767H1093.5V710H1095.5V710H1096.5V756H1097.5V767H1106.5V756H1107.5V740H1108.5V710H1110.5V727H1111.5V710H1113.5V727H1114.5V710H1115.5V740H1117.5V767H1119.5V740H1120.5V710H1121.5V727H1123.5V743H1125.5V767H1128.5V743H1130.5V756H1131.5V767V767 M1177.5 767H1177.5V740H1178.5V698H1179.5V683H1180.5V714H1181.5V756H1182.5V767H1187.5V740H1188.5V710H1189.5V740H1190.5V767H1197.5V756H1198.5V743H1201.5V743H1202.5V767V767 M1219.5 767H1219.5V756H1220.5V727H1221.5V710H1222.5V740H1223.5V767H1231.5V740H1232.5V710H1234.5V710H1234.5V740H1237.5V743H1238.5V756H1239.5V767H1242.5V740H1244.5V710H1244.5V727H1245.5V767V767 M1264.5 767H1264.5V740H1264.5V710H1265.5V727H1266.5V710H1267.5V740H1268.5V767H1271.5V740H1274.5V710H1278.5V698H1279.5V683H1281.5V698H1282.5V740H1284.5V698H1285.5V683H1286.5V698H1287.5V740H1289.5V756H1290.5V727H1292.5V710H1294.5V727H1296.5V743H1298.5V727H1299.5V710H1301.5V727H1302.5V710H1303.5V743H1305.5V710H1307.5V727H1308.5V743H1310.5V710H1313.5V710H1313.5V740H1315.5V767V767" fill="none" stroke="#8000ff" stroke-width="1"/>
<polyline points="667.4,767.2 668.1,757.3 669.4,743.3 690.6,743.3 691.3,767.2" fill="none" stroke="#000" stroke-width="1"/>
<polyline points="742.3,767.2 743.6,755.9 745.0,767.2" fill="none" stroke="#000" stroke-width="1"/>
<polyline points="793.4,767.2 796.0,755.9 800.0,755.9 801.3,743.3 808.0,743.3 809.3,767.2" fill="none" stroke="#000" stroke-width="1"/>
<polyline points="827.9,767.2 829.5,743.3 842.5,743.3 843.5,767.2" fill="none" stroke="#000" stroke-width="1"/>
<polyline points="1008.0,767.2 1010.0,749.3 1011.1,743.3 1016.4,743.3 1017.7,767.2" fill="none" stroke="#000" stroke-width="1"/>
<polyline points="1276.3,767.2 1278.3,743.3 1285.6,743.3 1287.3,723.4 1288.2,743.3 1293.5,743.3 1296.2,767.2" fill="none" stroke="#000" stroke-width="1"/>
<polyline points="1305.5,767.2 1306.8,743.3 1308.1,762.6 1309.5,749.3 1311.4,765.2 1312.8,754.6 1314.8,767.2" fill="none" stroke="#000" stroke-width="1"/>
<rect x="151" y="767" width="1170" height="1" fill="#00e0ff"/>
<polyline points="279.0,766.0 283.0,762.0 294.6,754.0 341.0,754.0 346.0,750.5 350.0,750.0 437.0,750.0 441.0,747.0 449.0,747.0 450.0,746.0 1320.0,746.0" fill="none" stroke="#00e0ff" stroke-width="2"/>
<path d="M279 767V763h7v4z M289 767V764h3v3z M341 767V764h3v3z M436 767V763h3v4z" fill="#00e0ff"/>
<line x1="151" y1="608" x2="1320" y2="608" stroke="#000" stroke-width="2"/>
<polyline points="151.0,542.3 166.8,540.2 198.2,539.1 210.8,538.1 231.7,533.9 248.5,531.8 275.7,527.0 296.7,525.5 307.1,522.0 351.1,522.0 361.6,520.3 380.5,515.0 405.6,513.0 441.2,508.8 461.0,505.0 492.4,501.8 507.0,502.2 525.9,498.7 536.4,494.9 565.7,490.3 586.7,487.8 628.6,480.9 670.5,478.1 687.2,473.5 712.4,471.8 730.0,470.3 748.9,470.8 761.4,472.4 786.6,471.8 818.0,469.7 841.0,470.3 851.5,472.9 862.0,472.2 887.1,468.7 912.3,467.0 937.4,466.1 947.9,462.4 956.3,461.3 989.8,461.3 1002.4,459.2 1023.3,456.1 1046.0,455.5 1059.0,450.7 1072.0,450.0 1085.0,449.0 1097.9,445.1 1128.2,443.6 1136.9,442.0 1145.6,443.6 1154.2,442.0 1178.0,439.9 1188.9,437.7 1206.2,437.1 1219.2,435.5 1227.8,432.7 1240.8,431.6 1258.1,430.8 1269.0,429.9 1284.1,431.6 1301.4,431.2 1320.0,430.8" fill="none" stroke="#00ff40" stroke-width="2" stroke-linejoin="round"/>
<polyline points="151.0,120.0 157.3,120.0 163.6,113.7 166.8,117.2 173.0,120.0 187.7,120.0 193.0,114.0 197.1,112.6 359.5,112.6 363.7,107.2 367.9,105.7 373.1,105.7 375.2,109.9 381.5,112.0 395.1,112.6 398.3,107.8 402.5,105.7 426.5,105.7 427.6,107.8 431.8,105.7 433.9,107.8 437.0,105.7 628.6,106.0 629.2,104.1 637.0,105.1 638.0,106.0 652.7,106.0 655.8,101.0 661.0,98.9 667.3,97.8 699.8,97.8 701.9,102.0 706.1,104.7 712.6,105.7 740.9,105.7 743.0,109.9 749.2,111.6 751.3,116.8 754.5,114.7 761.8,119.3 775.4,119.8 780.7,130.9 785.9,138.2 793.2,141.3 795.3,145.5 799.5,148.7 802.7,152.9 807.9,155.4 814.2,163.3 818.4,162.3 822.6,163.3 825.7,167.5 828.8,165.0 834.1,174.9 838.3,179.0 841.4,178.0 846.7,184.3 851.9,191.0 861.3,192.0 865.5,186.8 869.7,182.2 876.0,177.0 881.2,175.9 885.4,170.7 890.7,164.4 902.2,163.3 907.4,157.5 911.6,156.0 928.4,156.0 934.7,149.7 938.8,149.1 951.4,149.1 954.6,144.9 958.7,142.0 965.0,135.0 972.4,134.0 995.9,134.1 1000.0,139.8 1004.2,137.0 1006.6,138.2 1011.4,135.1 1017.3,134.1 1067.2,134.1 1071.9,128.7 1077.8,126.8 1087.3,126.8 1089.7,122.7 1096.8,119.9 1102.8,119.9 1109.9,125.6 1113.5,122.7 1119.4,120.4 1121.8,125.1 1125.3,123.2 1131.3,126.8 1137.2,124.6 1140.8,126.8 1153.8,126.8 1157.4,122.3 1163.3,119.9 1175.2,119.9 1178.7,123.9 1185.9,119.9 1231.0,119.9 1234.5,115.6 1238.1,113.2 1242.8,107.3 1247.6,111.3 1252.3,112.8 1273.7,112.8 1277.3,108.5 1283.2,105.6 1320.0,105.6" fill="none" stroke="#804000" stroke-width="2" stroke-linejoin="round"/>
<polyline points="151.0,599.5 164.0,596.0 174.4,598.6 183.2,598.3 191.9,596.0 200.6,594.8 230.3,595.2 242.5,596.9 254.7,595.2 287.9,593.8 290.0,593.8 360.1,593.8 362.4,591.5 369.6,589.1 373.1,589.7 377.9,592.7 382.6,593.8 395.7,593.8 399.3,591.5 406.4,591.1 414.7,589.1 420.6,589.7 426.6,591.8 431.3,591.1 434.9,592.1 440.8,590.9 444.4,589.7 460.0,589.7 473.6,588.0 480.5,590.3 492.8,588.9 498.0,587.5 562.6,587.5 569.6,585.4 592.3,581.9 608.0,580.5 627.2,576.3 639.4,574.0 645.0,573.2 650.5,573.4 666.2,563.8 687.1,555.1 697.6,549.0 711.6,549.0 720.3,544.6 737.8,537.6 743.0,535.5 753.5,536.7 774.4,530.6 793.6,530.6 814.6,533.8 828.5,531.0 839.0,535.9 846.0,535.0 851.2,538.5 872.2,547.2 880.0,552.0 888.7,554.1 899.2,555.9 907.1,555.0 914.9,559.0 932.4,563.7 944.6,566.3 953.3,570.7 962.0,569.8 979.5,569.8 1002.2,582.1 1028.4,596.9 1054.6,607.9 1066.8,614.4 1079.0,616.1 1087.8,618.7 1096.5,613.5 1108.7,620.5 1119.2,620.1 1128.8,626.9 1147.9,633.5 1158.1,634.3 1169.9,637.9 1178.7,641.6 1188.9,641.6 1193.3,643.8 1213.9,645.3 1221.2,647.8 1232.9,647.8 1243.2,639.8 1254.9,640.9 1262.2,642.8 1272.5,642.3 1284.2,630.6 1293.0,628.4 1310.6,626.9 1320.2,624.7" fill="none" stroke="#007030" stroke-width="2" stroke-linejoin="round"/>
<polyline points="151.5,576.5 166.2,575.2 169.7,573.8 173.2,575.2 181.1,576.1 190.7,573.8 230.8,573.8 237.8,576.1 248.3,576.1 255.2,573.8 288.4,573.2 290.5,573.2 362.9,573.2 368.9,571.2 376.0,571.2 379.0,573.0 416.4,573.0 418.8,571.2 427.1,572.4 430.6,573.2 443.7,573.2 448.5,571.4 460.5,571.4 479.3,571.1 493.3,570.5 561.4,570.5 573.6,566.7 587.5,564.6 605.0,563.2 622.4,558.8 640.5,556.4 651.0,555.2 666.7,547.7 687.6,539.9 698.1,532.9 713.8,529.0 741.8,516.2 759.2,511.6 762.8,510.1 774.9,506.6 787.2,500.4 804.8,495.6 812.6,495.1 828.3,489.6 836.1,488.1 847.8,488.1 861.5,492.6 872.7,503.1 880.5,507.4 891.0,514.8 906.7,518.0 927.6,525.8 934.6,530.2 945.1,532.8 959.1,540.7 980.0,541.5 994.0,546.8 1016.7,561.6 1041.1,575.6 1058.6,582.6 1069.0,587.8 1079.5,590.4 1086.5,594.8 1095.2,591.2 1100.5,591.6 1110.9,596.2 1119.7,597.4 1126.4,601.0 1142.5,606.6 1152.8,611.2 1170.4,615.7 1179.2,619.4 1190.9,620.8 1212.9,622.2 1220.2,625.2 1236.4,626.2 1243.7,621.6 1255.4,621.6 1259.8,622.7 1273.0,622.2 1278.9,617.9 1287.7,611.6 1303.8,610.6 1312.6,609.8 1317.0,607.6 1320.7,608.4" fill="none" stroke="#ff8000" stroke-width="2" stroke-linejoin="round"/>
<polyline points="151.0,576.0 165.7,574.7 169.2,573.3 172.7,574.7 180.6,575.6 190.2,573.3 230.3,573.3 237.3,575.6 247.8,575.6 254.7,573.3 287.9,572.8 290.0,572.8 362.4,572.8 368.4,570.7 375.5,570.7 378.5,572.5 415.9,572.5 418.3,570.7 426.6,571.9 430.1,572.8 443.2,572.8 448.0,570.9 460.0,570.9 478.8,570.6 492.8,570.0 560.9,570.0 573.1,566.2 587.0,564.1 604.5,562.7 621.9,558.3 640.0,555.9 650.5,554.7 666.2,547.2 687.1,539.4 697.6,532.4 713.3,528.5 741.3,515.8 758.7,511.1 762.3,509.7 774.4,506.2 786.7,500.0 804.3,495.1 812.1,494.6 827.8,489.2 835.6,487.7 847.3,487.7 861.0,492.1 872.2,502.7 880.0,507.0 890.5,514.3 906.2,517.5 927.1,525.3 934.1,529.7 944.6,532.3 958.6,540.2 979.5,541.0 993.5,546.3 1016.2,561.1 1040.6,575.1 1058.1,582.1 1068.5,587.3 1079.0,589.9 1086.0,594.3 1094.7,590.8 1100.0,591.1 1110.4,595.7 1119.2,596.9 1125.9,600.5 1142.0,606.1 1152.3,610.8 1169.9,615.2 1178.7,618.9 1190.4,620.3 1212.4,621.8 1219.7,624.7 1235.9,625.8 1243.2,621.1 1254.9,621.1 1259.3,622.2 1272.5,621.8 1278.4,617.4 1287.2,611.1 1303.3,610.1 1312.1,609.3 1316.5,607.1 1320.2,607.9" fill="none" stroke="#0000ff" stroke-width="2" stroke-linejoin="round"/>
<polyline points="151.0,581.2 183.2,581.2 186.7,576.0 191.9,579.4 197.1,579.4 202.4,581.2 246.0,581.2 249.5,576.0 254.7,579.4 260.0,581.2 268.7,581.2 270.5,578.6 279.2,578.6 284.4,579.4 288.8,575.1 290.0,576.6 293.6,580.2 297.1,581.1 306.0,580.8 306.6,578.8 309.6,580.0 313.8,577.2 318.5,580.0 322.1,579.6 326.8,574.8 331.0,578.8 334.5,578.4 335.1,580.2 339.3,575.4 341.1,573.3 343.4,573.7 344.0,576.0 345.8,573.3 348.2,573.7 352.9,579.6 360.1,581.1 362.4,577.8 365.4,578.4 373.1,573.1 375.5,574.0 381.4,580.2 387.4,576.0 391.0,576.6 397.5,572.5 401.6,579.2 404.0,577.2 407.0,577.8 412.3,573.7 415.9,572.5 418.9,576.6 421.2,575.4 422.4,573.7 425.4,574.8 428.4,577.2 431.3,574.8 436.7,580.2 439.6,577.8 444.4,573.1 446.8,572.5 460.0,572.5 471.8,572.8 473.6,574.9 477.1,572.8 569.6,572.8 576.6,564.4 581.8,563.6 583.5,567.1 587.0,564.4 604.5,562.3 607.1,558.9 609.7,561.0 618.5,556.1 623.7,554.8 634.2,554.8 637.7,550.5 645.0,545.2 649.6,545.5 654.0,541.1 662.7,537.6 665.3,533.2 669.7,529.8 675.8,528.0 677.5,522.8 688.9,513.5 694.1,517.5 701.1,517.5 706.3,512.3 715.9,507.9 722.1,510.0 725.5,503.6 735.4,494.6 738.8,498.5 745.6,500.7 749.6,500.7 754.9,482.4 757.4,479.0 761.8,476.0 765.2,481.2 771.5,475.7 774.0,480.4 780.8,476.0 781.8,479.0 785.2,476.0 786.7,480.6 793.5,482.9 798.4,479.0 803.3,482.9 807.2,482.9 815.0,476.0 817.5,475.5 821.4,468.7 824.8,473.1 826.8,470.6 832.6,475.5 833.6,479.0 837.5,475.7 841.9,475.7 845.8,481.4 847.8,492.1 851.2,497.0 858.1,509.3 860.0,514.0 867.8,521.0 875.7,518.4 880.0,522.7 888.7,527.6 894.0,523.6 902.7,527.6 910.6,541.0 917.5,544.5 921.9,545.0 927.1,553.2 932.4,555.9 935.9,560.2 940.2,556.7 949.8,555.5 954.2,561.1 960.3,562.8 969.9,562.8 975.1,570.7 978.6,566.3 982.1,571.2 984.7,567.2 993.5,576.8 998.7,587.3 1003.1,585.5 1007.4,589.4 1016.2,589.9 1023.2,598.6 1028.4,606.5 1033.6,603.9 1040.6,607.9 1058.1,607.9 1063.3,616.1 1077.3,617.3 1082.5,624.0 1087.8,614.4 1096.5,608.2 1103.5,622.2 1108.7,624.8 1113.9,620.5 1120.9,624.8 1124.4,630.1 1127.3,631.3 1133.2,635.0 1149.3,635.0 1152.3,638.7 1158.1,635.4 1164.0,641.6 1168.4,643.1 1203.6,643.1 1205.1,645.7 1215.3,643.1 1219.0,648.9 1222.7,640.1 1227.1,642.3 1232.9,642.8 1237.3,637.5 1241.7,635.7 1252.0,635.0 1253.5,639.4 1256.4,641.6 1260.8,637.2 1266.6,635.7 1274.0,635.0 1275.4,630.6 1278.4,628.4 1281.3,621.1 1287.2,618.9 1290.1,623.7 1296.0,619.3 1300.4,623.7 1309.2,618.1 1318.0,617.8 1320.6,622.5" fill="none" stroke="#ff0000" stroke-width="2" stroke-linejoin="round"/>
<rect x="535" y="764" width="2" height="12" fill="#ffff00"/>
<rect x="1000" y="764" width="2" height="12" fill="#ffff00"/>
<rect x="615" y="764" width="2" height="12" fill="#808080"/>
<path d="M151 769 V48 H1321 V769" fill="none" stroke="#808080" stroke-width="2"/>
<rect x="150" y="768" width="1172" height="1" fill="#907870"/>
<rect x="0" y="800" width="1431" height="90" fill="#ff8000"/>
<rect x="87" y="800" width="1" height="90" fill="#f0f0f0"/>
<rect x="88" y="800" width="1" height="90" fill="#a0a0a0"/>
<rect x="204" y="800" width="1" height="90" fill="#f0f0f0"/>
<rect x="205" y="800" width="1" height="90" fill="#a0a0a0"/>
<rect x="322" y="800" width="1" height="90" fill="#f0f0f0"/>
<rect x="323" y="800" width="1" height="90" fill="#a0a0a0"/>
<rect x="440" y="800" width="1" height="90" fill="#f0f0f0"/>
<rect x="441" y="800" width="1" height="90" fill="#a0a0a0"/>
<rect x="558" y="800" width="1" height="90" fill="#f0f0f0"/>
<rect x="559" y="800" width="1" height="90" fill="#a0a0a0"/>
<rect x="676" y="800" width="1" height="90" fill="#f0f0f0"/>
<rect x="677" y="800" width="1" height="90" fill="#a0a0a0"/>
<rect x="794" y="800" width="1" height="90" fill="#f0f0f0"/>
<rect x="795" y="800" width="1" height="90" fill="#a0a0a0"/>
<rect x="912" y="800" width="1" height="90" fill="#f0f0f0"/>
<rect x="913" y="800" width="1" height="90" fill="#a0a0a0"/>
<rect x="1431" y="800" width="1" height="131" fill="#a0a0a0"/>
<rect x="0" y="890" width="1432" height="3" fill="#e8e8e8"/>
<rect x="0" y="893" width="1430" height="36" fill="#2ee61a"/>
<rect x="0" y="929" width="1432" height="1" fill="#f4f4f4"/>
<rect x="0" y="930" width="1432" height="1" fill="#a0a0a0"/>
<rect x="87" y="893" width="1" height="36" fill="#f4f4f4"/>
<rect x="88" y="893" width="1" height="36" fill="#a0a0a0"/>
<rect x="204" y="893" width="1" height="36" fill="#f4f4f4"/>
<rect x="205" y="893" width="1" height="36" fill="#a0a0a0"/>
<rect x="322" y="893" width="1" height="36" fill="#f4f4f4"/>
<rect x="323" y="893" width="1" height="36" fill="#a0a0a0"/>
<rect x="440" y="893" width="1" height="36" fill="#f4f4f4"/>
<rect x="441" y="893" width="1" height="36" fill="#a0a0a0"/>
<rect x="558" y="893" width="1" height="36" fill="#f4f4f4"/>
<rect x="559" y="893" width="1" height="36" fill="#a0a0a0"/>
<rect x="1430" y="893" width="1" height="36" fill="#f4f4f4"/>
<text x="8" y="818" fill="#000" text-anchor="start" font-size="11" font-weight="bold" letter-spacing="0.3">Sensor</text>
<text x="8" y="834" fill="#000" text-anchor="start" font-size="11" font-weight="bold" letter-spacing="0.3">MinWert</text>
<text x="8" y="850" fill="#000" text-anchor="start" font-size="11" font-weight="bold" letter-spacing="0.3">MaxWert</text>
<text x="8" y="866" fill="#000" text-anchor="start" font-size="11" font-weight="bold" letter-spacing="0.3">Durchschnitt</text>
<text x="8" y="882" fill="#000" text-anchor="start" font-size="11" font-weight="bold" letter-spacing="0.3">07.02. 23:59</text>
<text x="95" y="818" fill="#000" text-anchor="start" font-size="11" font-weight="bold" letter-spacing="0.6">Temp. 2m</text>
<text x="199" y="818" fill="#000" text-anchor="end" font-size="11" font-weight="bold" letter-spacing="0.2">°C</text>
<text x="101" y="834" fill="#000" text-anchor="start" font-size="11" font-weight="normal" >21:52</text>
<text x="198" y="834" fill="#000" text-anchor="end" font-size="11" font-weight="normal" >-1.1</text>
<text x="101" y="850" fill="#000" text-anchor="start" font-size="11" font-weight="normal" >14:14</text>
<text x="198" y="850" fill="#000" text-anchor="end" font-size="11" font-weight="normal" >7.6</text>
<text x="198" y="866" fill="#000" text-anchor="end" font-size="11" font-weight="normal" >2.75</text>
<text x="96" y="882" fill="#000" text-anchor="start" font-size="11" font-weight="normal" >F: 92 %</text>
<text x="199" y="882" fill="#000" text-anchor="end" font-size="11" font-weight="bold" letter-spacing="0.2">-0.1</text>
<text x="212" y="818" fill="#000" text-anchor="start" font-size="11" font-weight="bold" letter-spacing="0.6">Temp. 5cm</text>
<text x="317" y="818" fill="#000" text-anchor="end" font-size="11" font-weight="bold" letter-spacing="0.2">°C</text>
<text x="218" y="834" fill="#000" text-anchor="start" font-size="11" font-weight="normal" >21:37</text>
<text x="316" y="834" fill="#000" text-anchor="end" font-size="11" font-weight="normal" >-2.8</text>
<text x="218" y="850" fill="#000" text-anchor="start" font-size="11" font-weight="normal" >13:41</text>
<text x="316" y="850" fill="#000" text-anchor="end" font-size="11" font-weight="normal" >8.9</text>
<text x="316" y="866" fill="#000" text-anchor="end" font-size="11" font-weight="normal" >2.30</text>
<text x="317" y="882" fill="#000" text-anchor="end" font-size="11" font-weight="bold" letter-spacing="0.2">-1.1</text>
<text x="330" y="818" fill="#000" text-anchor="start" font-size="11" font-weight="bold" letter-spacing="0.6">Feuchte A.</text>
<text x="435" y="818" fill="#000" text-anchor="end" font-size="11" font-weight="bold" letter-spacing="0.2">%</text>
<text x="336" y="834" fill="#000" text-anchor="start" font-size="11" font-weight="normal" >14:17</text>
<text x="434" y="834" fill="#000" text-anchor="end" font-size="11" font-weight="normal" >80</text>
<text x="336" y="850" fill="#000" text-anchor="start" font-size="11" font-weight="normal" >09:48</text>
<text x="434" y="850" fill="#000" text-anchor="end" font-size="11" font-weight="normal" >93</text>
<text x="434" y="866" fill="#000" text-anchor="end" font-size="11" font-weight="normal" >90</text>
<text x="334" y="882" fill="#000" text-anchor="start" font-size="11" font-weight="normal" >4.43 g/m³</text>
<text x="435" y="882" fill="#000" text-anchor="end" font-size="11" font-weight="bold" letter-spacing="0.2">92</text>
<text x="448" y="818" fill="#000" text-anchor="start" font-size="11" font-weight="bold" letter-spacing="0.6">Regen</text>
<text x="553" y="818" fill="#000" text-anchor="end" font-size="11" font-weight="bold" letter-spacing="0.2">l/m²</text>
<text x="454" y="850" fill="#000" text-anchor="start" font-size="11" font-weight="normal" >02:39</text>
<text x="552" y="850" fill="#000" text-anchor="end" font-size="11" font-weight="normal" >0.2</text>
<text x="448" y="866" fill="#000" text-anchor="start" font-size="11" font-weight="normal" >Gesamt:</text>
<text x="552" y="866" fill="#000" text-anchor="end" font-size="11" font-weight="normal" >1.2</text>
<text x="452" y="882" fill="#000" text-anchor="start" font-size="11" font-weight="normal" >1.2 l/m²</text>
<text x="553" y="882" fill="#000" text-anchor="end" font-size="11" font-weight="bold" letter-spacing="0.2">0.0</text>
<text x="566" y="818" fill="#000" text-anchor="start" font-size="11" font-weight="bold" letter-spacing="0.6">Luftdruck</text>
<text x="671" y="818" fill="#000" text-anchor="end" font-size="11" font-weight="bold" letter-spacing="0.2">hPa</text>
<text x="572" y="834" fill="#000" text-anchor="start" font-size="11" font-weight="normal" >00:00</text>
<text x="670" y="834" fill="#000" text-anchor="end" font-size="11" font-weight="normal" >998.8</text>
<text x="572" y="850" fill="#000" text-anchor="start" font-size="11" font-weight="normal" >22:44</text>
<text x="670" y="850" fill="#000" text-anchor="end" font-size="11" font-weight="normal" >1008.2</text>
<text x="566" y="866" fill="#000" text-anchor="start" font-size="11" font-weight="normal" >^0.9hPa/h</text>
<text x="670" y="866" fill="#000" text-anchor="end" font-size="11" font-weight="normal" >1004.0</text>
<text x="566" y="882" fill="#000" text-anchor="start" font-size="11" font-weight="normal" >veränderlich</text>
<text x="671" y="882" fill="#000" text-anchor="end" font-size="11" font-weight="bold" letter-spacing="0.2">1008.1</text>
<text x="684" y="818" fill="#000" text-anchor="start" font-size="11" font-weight="bold" letter-spacing="0.6">Sonnenschein</text>
<text x="789" y="818" fill="#000" text-anchor="end" font-size="11" font-weight="bold" letter-spacing="0.2">min</text>
<text x="690" y="850" fill="#000" text-anchor="start" font-size="11" font-weight="normal" >00:00</text>
<text x="788" y="850" fill="#000" text-anchor="end" font-size="11" font-weight="normal" >0</text>
<text x="684" y="866" fill="#000" text-anchor="start" font-size="11" font-weight="normal" >0 min.</text>
<text x="788" y="866" fill="#000" text-anchor="end" font-size="11" font-weight="normal" >0</text>
<text x="789" y="882" fill="#000" text-anchor="end" font-size="11" font-weight="bold" letter-spacing="0.2">0</text>
<text x="802" y="818" fill="#000" text-anchor="start" font-size="11" font-weight="bold" letter-spacing="0.6">Windböen</text>
<text x="907" y="818" fill="#000" text-anchor="end" font-size="11" font-weight="bold" letter-spacing="0.2">km/h</text>
<text x="802" y="834" fill="#000" text-anchor="start" font-size="11" font-weight="normal" >Ø 10 min.</text>
<text x="906" y="834" fill="#000" text-anchor="end" font-size="11" font-weight="normal" >0.0</text>
<text x="808" y="850" fill="#000" text-anchor="start" font-size="11" font-weight="normal" >10:36</text>
<text x="906" y="850" fill="#000" text-anchor="end" font-size="11" font-weight="normal" >O-NO 4.7</text>
<text x="809" y="866" fill="#000" text-anchor="start" font-size="11" font-weight="normal" >14.1 km</text>
<text x="906" y="866" fill="#000" text-anchor="end" font-size="11" font-weight="normal" >0.6</text>
<text x="808" y="882" fill="#000" text-anchor="start" font-size="11" font-weight="normal" >0 Bft N</text>
<text x="907" y="882" fill="#000" text-anchor="end" font-size="11" font-weight="bold" letter-spacing="0.2">0.0</text>
<text x="920" y="818" fill="#000" text-anchor="start" font-size="11" font-weight="bold" letter-spacing="0.6">Wind</text>
<text x="1023" y="818" fill="#000" text-anchor="end" font-size="11" font-weight="bold" letter-spacing="0.2">km/h</text>
<text x="920" y="834" fill="#000" text-anchor="start" font-size="11" font-weight="normal" >Ø 10 min.</text>
<text x="1022" y="834" fill="#000" text-anchor="end" font-size="11" font-weight="normal" >0.1</text>
<text x="926" y="850" fill="#000" text-anchor="start" font-size="11" font-weight="normal" >23:18</text>
<text x="1022" y="850" fill="#000" text-anchor="end" font-size="11" font-weight="normal" >NO 2.5</text>
<text x="927" y="866" fill="#000" text-anchor="start" font-size="11" font-weight="normal" >14.1 km</text>
<text x="1022" y="866" fill="#000" text-anchor="end" font-size="11" font-weight="normal" >0.1</text>
<text x="926" y="882" fill="#000" text-anchor="start" font-size="11" font-weight="normal" >0 Bft N</text>
<text x="1023" y="882" fill="#000" text-anchor="end" font-size="11" font-weight="bold" letter-spacing="0.2">0.0</text>
<text x="7" y="907" fill="#000" text-anchor="start" font-size="11" font-weight="normal" >Wetterdaten</text>
<text x="7" y="922" fill="#000" text-anchor="start" font-size="11" font-weight="normal" >07.02.26 23:59</text>
<text x="94" y="907" fill="#000" text-anchor="start" font-size="11" font-weight="normal" >Temp. I.</text>
<text x="198" y="907" fill="#000" text-anchor="end" font-size="11" font-weight="normal" >17.6 °C</text>
<text x="94" y="922" fill="#000" text-anchor="start" font-size="11" font-weight="normal" >Feuchte I.</text>
<text x="198" y="922" fill="#000" text-anchor="end" font-size="11" font-weight="normal" >42 %</text>
<text x="211" y="907" fill="#000" text-anchor="start" font-size="11" font-weight="normal" >Temp. 2m</text>
<text x="316" y="907" fill="#000" text-anchor="end" font-size="11" font-weight="normal" >-0.1 °C</text>
<text x="211" y="922" fill="#000" text-anchor="start" font-size="11" font-weight="normal" >Feuchte A.</text>
<text x="316" y="922" fill="#000" text-anchor="end" font-size="11" font-weight="normal" >92 %</text>
<text x="329" y="907" fill="#000" text-anchor="start" font-size="11" font-weight="normal" >Luftdruck</text>
<text x="434" y="907" fill="#000" text-anchor="end" font-size="11" font-weight="normal" >1008.1 hPa</text>
<text x="329" y="922" fill="#000" text-anchor="start" font-size="11" font-weight="normal" >Regen</text>
<text x="434" y="922" fill="#000" text-anchor="end" font-size="11" font-weight="normal" >0.0 l/m²</text>
<text x="447" y="907" fill="#000" text-anchor="start" font-size="11" font-weight="normal" >Wind</text>
<text x="552" y="907" fill="#000" text-anchor="end" font-size="11" font-weight="normal" >0.0 km/h</text>
<text x="447" y="922" fill="#000" text-anchor="start" font-size="11" font-weight="normal" >Richtung</text>
<text x="552" y="922" fill="#000" text-anchor="end" font-size="11" font-weight="normal" >N</text>
<text x="1099" y="907" fill="#000" text-anchor="start" font-size="11" font-weight="normal" >WR 355°</text>
<text x="1099" y="922" fill="#000" text-anchor="start" font-size="11" font-weight="normal" >WC -0.1°C</text>
<text x="1169" y="907" fill="#000" text-anchor="start" font-size="11" font-weight="normal" >Solar</text>
<text x="1285" y="907" fill="#000" text-anchor="end" font-size="11" font-weight="normal" >0 W/m²</text>
<text x="1169" y="922" fill="#000" text-anchor="start" font-size="11" font-weight="normal" >ET</text>
<text x="1276" y="922" fill="#000" text-anchor="end" font-size="11" font-weight="normal" >0.000 mm</text>
<text x="1309" y="907" fill="#000" text-anchor="start" font-size="11" font-weight="normal" >UV</text>
<text x="1426" y="907" fill="#000" text-anchor="end" font-size="11" font-weight="normal" >0.0 UV-I</text>
<text x="1309" y="922" fill="#000" text-anchor="start" font-size="11" font-weight="normal" >Taupunkt</text>
<text x="1417" y="922" fill="#000" text-anchor="end" font-size="11" font-weight="normal" >-1.2 °C</text>
<g shape-rendering="geometricPrecision">
<rect x="562" y="894" width="34" height="34" fill="#5896c8"/>
<rect x="563" y="895" width="33" height="33" fill="#6aa6d4"/>
<path d="M562 894.5H596M562.5 894V928" stroke="#080818" stroke-width="1"/>
<ellipse cx="582" cy="905" rx="6" ry="4" fill="#a8c890" opacity="0.8"/>
<ellipse cx="576" cy="900" rx="4.5" ry="3" fill="#f0f8ff"/>
<ellipse cx="581" cy="901" rx="3" ry="2.5" fill="#e0eef8"/>
<ellipse cx="593" cy="899" rx="3" ry="2.5" fill="#f0f8ff"/>
<ellipse cx="588" cy="902" rx="3" ry="1.5" fill="#4a7898"/>
<circle cx="578" cy="907.5" r="3" fill="#f4f020"/>
<ellipse cx="575" cy="913" rx="8" ry="4.5" fill="#e4f2fb"/>
<ellipse cx="589" cy="912" rx="7" ry="5" fill="#e8f4fc"/>
<ellipse cx="582" cy="916" rx="11" ry="2.5" fill="#d8eaf6"/>
<ellipse cx="580" cy="920" rx="12" ry="1.8" fill="#3e6a8e"/>
<ellipse cx="573" cy="925" rx="4" ry="2" fill="#eef6fc"/>
<ellipse cx="573" cy="927" rx="3" ry="1" fill="#203850"/>
</g>
<text transform="matrix(1 0 0 1.12 10 797)" fill="#000" text-anchor="start" font-size="11" font-weight="normal" >09:33</text>
<path d="M40 797 A4.5 4.5 0 0 1 49 797 Z" fill="#ffff00" shape-rendering="geometricPrecision"/>
<text transform="matrix(1 0 0 1.12 502 797)" fill="#000" text-anchor="start" font-size="11" font-weight="normal" >07:54</text>
<g shape-rendering="geometricPrecision"><circle cx="537" cy="794" r="5.5" fill="#ffffc0"/><circle cx="537" cy="794" r="3.8" fill="#ffff00"/></g>
<path d="M612 789 L620 789 L616 796 Z" fill="#e0d000"/><path d="M616 796 L621 797" stroke="#4040c0" stroke-width="1"/>
<text transform="matrix(1 0 0 1.12 623 797)" fill="#000" text-anchor="start" font-size="11" font-weight="normal" >09:32</text>
<text transform="matrix(1 0 0 1.12 968 797)" fill="#000" text-anchor="start" font-size="11" font-weight="normal" >17:27</text>
<rect x="998.5" y="790.5" width="5" height="5" fill="none" stroke="#ffff40" stroke-width="1"/>
</svg>

</body></html>
